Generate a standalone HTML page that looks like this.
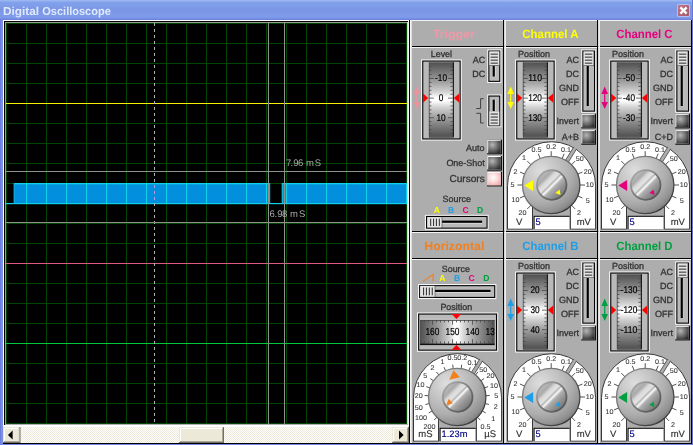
<!DOCTYPE html>
<html><head><meta charset="utf-8"><title>Digital Oscilloscope</title>
<style>html,body{margin:0;padding:0;background:#7b8fe4;overflow:hidden}svg{display:block;font-family:"Liberation Sans",sans-serif;will-change:transform;text-rendering:geometricPrecision}</style>
</head><body>
<svg width="693" height="445" viewBox="0 0 693 445">
<defs>
<linearGradient id="gClose" x1="0" y1="0" x2="1" y2="1"><stop offset="0" stop-color="#c27486"/><stop offset="1" stop-color="#a4566a"/></linearGradient>
<linearGradient id="gTitle" x1="0" y1="0" x2="0" y2="1"><stop offset="0" stop-color="#a2bbf2"/><stop offset="0.12" stop-color="#82a2ec"/><stop offset="0.5" stop-color="#7b96e4"/><stop offset="0.85" stop-color="#7f9ceb"/><stop offset="0.96" stop-color="#7388e0"/><stop offset="1" stop-color="#6a7cd8"/></linearGradient>
<linearGradient id="gLeft" x1="0" y1="0" x2="1" y2="0"><stop offset="0" stop-color="#5a68cc"/><stop offset="0.3" stop-color="#7c8fe6"/><stop offset="1" stop-color="#7c8fe6"/></linearGradient>
<linearGradient id="gDrumV" x1="0" y1="0" x2="0" y2="1"><stop offset="0" stop-color="#505050"/><stop offset="0.1" stop-color="#6e6e6e"/><stop offset="0.28" stop-color="#a6a6a6"/><stop offset="0.4" stop-color="#d4d4d4"/><stop offset="0.475" stop-color="#ffffff"/><stop offset="0.515" stop-color="#ffffff"/><stop offset="0.6" stop-color="#d4d4d4"/><stop offset="0.72" stop-color="#a6a6a6"/><stop offset="0.9" stop-color="#6e6e6e"/><stop offset="1" stop-color="#505050"/></linearGradient>
<linearGradient id="gDrumH" x1="0" y1="0" x2="1" y2="0"><stop offset="0" stop-color="#505050"/><stop offset="0.1" stop-color="#6e6e6e"/><stop offset="0.28" stop-color="#a6a6a6"/><stop offset="0.4" stop-color="#d4d4d4"/><stop offset="0.465" stop-color="#ffffff"/><stop offset="0.505" stop-color="#ffffff"/><stop offset="0.59" stop-color="#d4d4d4"/><stop offset="0.72" stop-color="#a6a6a6"/><stop offset="0.9" stop-color="#6e6e6e"/><stop offset="1" stop-color="#505050"/></linearGradient>
<radialGradient id="gKnobO" cx="0.32" cy="0.26" r="0.84"><stop offset="0" stop-color="#dedede"/><stop offset="0.3" stop-color="#c8c8c8"/><stop offset="0.65" stop-color="#adadad"/><stop offset="0.85" stop-color="#939393"/><stop offset="0.95" stop-color="#7c7c7c"/><stop offset="1" stop-color="#686868"/></radialGradient>
<linearGradient id="gRim" x1="0.15" y1="0.15" x2="0.85" y2="0.85"><stop offset="0" stop-color="#828282"/><stop offset="0.5" stop-color="#626262"/><stop offset="1" stop-color="#3a3a3a"/></linearGradient>
<linearGradient id="gKnobRing" x1="0.15" y1="0.15" x2="0.85" y2="0.85"><stop offset="0" stop-color="#a4a4a4"/><stop offset="0.5" stop-color="#7a7a7a"/><stop offset="1" stop-color="#565656"/></linearGradient>
<linearGradient id="gKnobI" x1="0.15" y1="0.15" x2="0.85" y2="0.85"><stop offset="0" stop-color="#b8b8b8"/><stop offset="0.15" stop-color="#aaaaaa"/><stop offset="0.28" stop-color="#dadada"/><stop offset="0.40" stop-color="#e2e2e2"/><stop offset="0.46" stop-color="#b6b6b6"/><stop offset="0.53" stop-color="#f8f8f8"/><stop offset="0.62" stop-color="#b0b0b0"/><stop offset="0.8" stop-color="#949494"/><stop offset="1" stop-color="#7c7c7c"/></linearGradient>
<radialGradient id="gBtn" cx="0.33" cy="0.33" r="0.8"><stop offset="0" stop-color="#b6b6b6"/><stop offset="0.45" stop-color="#787878"/><stop offset="1" stop-color="#2a2a2a"/></radialGradient>
<radialGradient id="gBtnP" cx="0.4" cy="0.38" r="0.75"><stop offset="0" stop-color="#ffffff"/><stop offset="0.5" stop-color="#fbd8d8"/><stop offset="1" stop-color="#eea8a8"/></radialGradient>
<pattern id="chk" width="2" height="2" patternUnits="userSpaceOnUse"><rect width="2" height="2" fill="#ffffff"/><rect width="1" height="1" fill="#ece9d8"/><rect x="1" y="1" width="1" height="1" fill="#ece9d8"/></pattern>
</defs>
<rect x="0" y="0" width="693" height="445" fill="#7b8fe4" />
<rect x="0" y="0" width="693" height="20" fill="url(#gTitle)" />
<rect x="0" y="20" width="3" height="425" fill="url(#gLeft)" />
<rect x="0" y="443" width="693" height="2" fill="#7088e4" />
<rect x="3" y="443" width="689" height="1" fill="#000" />
<text y="15.1" font-size="11.5" font-weight="bold" fill="#dfe8fd"><tspan x="2.9" textLength="36.1" lengthAdjust="spacingAndGlyphs">Digital</tspan> <tspan x="42.3" textLength="68.5" lengthAdjust="spacingAndGlyphs">Oscilloscope</tspan></text>
<rect x="692" y="0" width="1" height="445" fill="#6a74d8" />
<rect x="677" y="4" width="13" height="13" fill="#b4c0f2" rx="2"/>
<rect x="678" y="5" width="11" height="11" fill="url(#gClose)" rx="1"/>
<line x1="680.4" y1="7.4" x2="686.6" y2="13.6" stroke="#ffffff" stroke-width="2.3" />
<line x1="686.6" y1="7.4" x2="680.4" y2="13.6" stroke="#ffffff" stroke-width="2.3" />
<rect x="3" y="20" width="406" height="407" fill="#ffffff" />
<rect x="4" y="21" width="404" height="404" fill="#000000" />
<rect x="5" y="22" width="403" height="403" fill="#989898" />
<rect x="407" y="22" width="1" height="403" fill="#d4d4d4" />
<rect x="408" y="21" width="1" height="406" fill="#f4f4f4" />
<rect x="5" y="424" width="403" height="1" fill="#b0b0b0" />
<rect x="6" y="23" width="401" height="401" fill="#000000" />
<rect x="6" y="23" width="1" height="401" fill="#024402" />
<rect x="26" y="23" width="1" height="401" fill="#024402" />
<rect x="46" y="23" width="1" height="401" fill="#024402" />
<rect x="66" y="23" width="1" height="401" fill="#024402" />
<rect x="86" y="23" width="1" height="401" fill="#024402" />
<rect x="106" y="23" width="1" height="401" fill="#024402" />
<rect x="126" y="23" width="1" height="401" fill="#024402" />
<rect x="146" y="23" width="1" height="401" fill="#024402" />
<rect x="166" y="23" width="1" height="401" fill="#024402" />
<rect x="186" y="23" width="1" height="401" fill="#024402" />
<rect x="206" y="23" width="1" height="401" fill="#024402" />
<rect x="226" y="23" width="1" height="401" fill="#024402" />
<rect x="246" y="23" width="1" height="401" fill="#024402" />
<rect x="266" y="23" width="1" height="401" fill="#024402" />
<rect x="286" y="23" width="1" height="401" fill="#024402" />
<rect x="306" y="23" width="1" height="401" fill="#024402" />
<rect x="326" y="23" width="1" height="401" fill="#024402" />
<rect x="346" y="23" width="1" height="401" fill="#024402" />
<rect x="366" y="23" width="1" height="401" fill="#024402" />
<rect x="386" y="23" width="1" height="401" fill="#024402" />
<rect x="406" y="23" width="1" height="401" fill="#024402" />
<rect x="6" y="23" width="401" height="1" fill="#024402" />
<rect x="6" y="43" width="401" height="1" fill="#024402" />
<rect x="6" y="63" width="401" height="1" fill="#024402" />
<rect x="6" y="83" width="401" height="1" fill="#024402" />
<rect x="6" y="103" width="401" height="1" fill="#024402" />
<rect x="6" y="123" width="401" height="1" fill="#024402" />
<rect x="6" y="143" width="401" height="1" fill="#024402" />
<rect x="6" y="163" width="401" height="1" fill="#024402" />
<rect x="6" y="183" width="401" height="1" fill="#024402" />
<rect x="6" y="203" width="401" height="1" fill="#024402" />
<rect x="6" y="223" width="401" height="1" fill="#024402" />
<rect x="6" y="243" width="401" height="1" fill="#024402" />
<rect x="6" y="263" width="401" height="1" fill="#024402" />
<rect x="6" y="283" width="401" height="1" fill="#024402" />
<rect x="6" y="303" width="401" height="1" fill="#024402" />
<rect x="6" y="323" width="401" height="1" fill="#024402" />
<rect x="6" y="343" width="401" height="1" fill="#024402" />
<rect x="6" y="363" width="401" height="1" fill="#024402" />
<rect x="6" y="383" width="401" height="1" fill="#024402" />
<rect x="6" y="403" width="401" height="1" fill="#024402" />
<rect x="6" y="423" width="401" height="1" fill="#024402" />
<rect x="14" y="183" width="255.6" height="21" fill="#0290de" />
<rect x="282.2" y="183" width="124.8" height="21" fill="#0290de" />
<rect x="14" y="183" width="255.6" height="1.3" fill="#0cd2ea" />
<rect x="282.2" y="183" width="124.8" height="1.3" fill="#0cd2ea" />
<rect x="6" y="203" width="401" height="1.2" fill="#0cd2ea" />
<rect x="26" y="183" width="1" height="21" fill="#0cd2ea" />
<rect x="46" y="183" width="1" height="21" fill="#0cd2ea" />
<rect x="66" y="183" width="1" height="21" fill="#0cd2ea" />
<rect x="86" y="183" width="1" height="21" fill="#0cd2ea" />
<rect x="106" y="183" width="1" height="21" fill="#0cd2ea" />
<rect x="126" y="183" width="1" height="21" fill="#0cd2ea" />
<rect x="146" y="183" width="1" height="21" fill="#0cd2ea" />
<rect x="166" y="183" width="1" height="21" fill="#0cd2ea" />
<rect x="186" y="183" width="1" height="21" fill="#0cd2ea" />
<rect x="206" y="183" width="1" height="21" fill="#0cd2ea" />
<rect x="226" y="183" width="1" height="21" fill="#0cd2ea" />
<rect x="246" y="183" width="1" height="21" fill="#0cd2ea" />
<rect x="266" y="183" width="1" height="21" fill="#0cd2ea" />
<rect x="286" y="183" width="1" height="21" fill="#0cd2ea" />
<rect x="306" y="183" width="1" height="21" fill="#0cd2ea" />
<rect x="326" y="183" width="1" height="21" fill="#0cd2ea" />
<rect x="346" y="183" width="1" height="21" fill="#0cd2ea" />
<rect x="366" y="183" width="1" height="21" fill="#0cd2ea" />
<rect x="386" y="183" width="1" height="21" fill="#0cd2ea" />
<rect x="406" y="183" width="1" height="21" fill="#0cd2ea" />
<rect x="13.6" y="183" width="1" height="21" fill="#10b0e8" />
<rect x="269.2" y="183" width="1" height="21" fill="#0cd2ea" />
<rect x="281.7" y="183" width="1" height="21" fill="#0cd2ea" />
<rect x="6" y="103" width="401" height="1" fill="#f4f000" />
<rect x="6" y="263" width="401" height="1" fill="#dc5a84" />
<rect x="6" y="343" width="401" height="1" fill="#00c83c" />
<rect x="268" y="23" width="1" height="401" fill="#909090" />
<rect x="284" y="23" width="1" height="401" fill="#909090" />
<rect x="6" y="171" width="401" height="1" fill="#909090" />
<rect x="154" y="23" width="1" height="3" fill="#b2b2b2" />
<rect x="154" y="29" width="1" height="3" fill="#b2b2b2" />
<rect x="154" y="35" width="1" height="3" fill="#b2b2b2" />
<rect x="154" y="41" width="1" height="3" fill="#b2b2b2" />
<rect x="154" y="47" width="1" height="3" fill="#b2b2b2" />
<rect x="154" y="53" width="1" height="3" fill="#b2b2b2" />
<rect x="154" y="59" width="1" height="3" fill="#b2b2b2" />
<rect x="154" y="65" width="1" height="3" fill="#b2b2b2" />
<rect x="154" y="71" width="1" height="3" fill="#b2b2b2" />
<rect x="154" y="77" width="1" height="3" fill="#b2b2b2" />
<rect x="154" y="83" width="1" height="3" fill="#b2b2b2" />
<rect x="154" y="89" width="1" height="3" fill="#b2b2b2" />
<rect x="154" y="95" width="1" height="3" fill="#b2b2b2" />
<rect x="154" y="101" width="1" height="3" fill="#b2b2b2" />
<rect x="154" y="107" width="1" height="3" fill="#b2b2b2" />
<rect x="154" y="113" width="1" height="3" fill="#b2b2b2" />
<rect x="154" y="119" width="1" height="3" fill="#b2b2b2" />
<rect x="154" y="125" width="1" height="3" fill="#b2b2b2" />
<rect x="154" y="131" width="1" height="3" fill="#b2b2b2" />
<rect x="154" y="137" width="1" height="3" fill="#b2b2b2" />
<rect x="154" y="143" width="1" height="3" fill="#b2b2b2" />
<rect x="154" y="149" width="1" height="3" fill="#b2b2b2" />
<rect x="154" y="155" width="1" height="3" fill="#b2b2b2" />
<rect x="154" y="161" width="1" height="3" fill="#b2b2b2" />
<rect x="154" y="167" width="1" height="3" fill="#b2b2b2" />
<rect x="154" y="173" width="1" height="3" fill="#b2b2b2" />
<rect x="154" y="179" width="1" height="3" fill="#b2b2b2" />
<rect x="154" y="185" width="1" height="3" fill="#b89ae6" />
<rect x="154" y="191" width="1" height="3" fill="#b89ae6" />
<rect x="154" y="197" width="1" height="3" fill="#b89ae6" />
<rect x="154" y="203" width="1" height="3" fill="#b2b2b2" />
<rect x="154" y="209" width="1" height="3" fill="#b2b2b2" />
<rect x="154" y="215" width="1" height="3" fill="#b2b2b2" />
<rect x="154" y="221" width="1" height="3" fill="#b2b2b2" />
<rect x="154" y="227" width="1" height="3" fill="#b2b2b2" />
<rect x="154" y="233" width="1" height="3" fill="#b2b2b2" />
<rect x="154" y="239" width="1" height="3" fill="#b2b2b2" />
<rect x="154" y="245" width="1" height="3" fill="#b2b2b2" />
<rect x="154" y="251" width="1" height="3" fill="#b2b2b2" />
<rect x="154" y="257" width="1" height="3" fill="#b2b2b2" />
<rect x="154" y="263" width="1" height="3" fill="#b2b2b2" />
<rect x="154" y="269" width="1" height="3" fill="#b2b2b2" />
<rect x="154" y="275" width="1" height="3" fill="#b2b2b2" />
<rect x="154" y="281" width="1" height="3" fill="#b2b2b2" />
<rect x="154" y="287" width="1" height="3" fill="#b2b2b2" />
<rect x="154" y="293" width="1" height="3" fill="#b2b2b2" />
<rect x="154" y="299" width="1" height="3" fill="#b2b2b2" />
<rect x="154" y="305" width="1" height="3" fill="#b2b2b2" />
<rect x="154" y="311" width="1" height="3" fill="#b2b2b2" />
<rect x="154" y="317" width="1" height="3" fill="#b2b2b2" />
<rect x="154" y="323" width="1" height="3" fill="#b2b2b2" />
<rect x="154" y="329" width="1" height="3" fill="#b2b2b2" />
<rect x="154" y="335" width="1" height="3" fill="#b2b2b2" />
<rect x="154" y="341" width="1" height="3" fill="#b2b2b2" />
<rect x="154" y="347" width="1" height="3" fill="#b2b2b2" />
<rect x="154" y="353" width="1" height="3" fill="#b2b2b2" />
<rect x="154" y="359" width="1" height="3" fill="#b2b2b2" />
<rect x="154" y="365" width="1" height="3" fill="#b2b2b2" />
<rect x="154" y="371" width="1" height="3" fill="#b2b2b2" />
<rect x="154" y="377" width="1" height="3" fill="#b2b2b2" />
<rect x="154" y="383" width="1" height="3" fill="#b2b2b2" />
<rect x="154" y="389" width="1" height="3" fill="#b2b2b2" />
<rect x="154" y="395" width="1" height="3" fill="#b2b2b2" />
<rect x="154" y="401" width="1" height="3" fill="#b2b2b2" />
<rect x="154" y="407" width="1" height="3" fill="#b2b2b2" />
<rect x="154" y="413" width="1" height="3" fill="#b2b2b2" />
<rect x="154" y="419" width="1" height="3" fill="#b2b2b2" />
<text x="285.9 290.5 293.2 298 302.9 306 314.7" y="166.1" font-size="9.5" fill="#a8a8a8">7.96 mS</text>
<text x="269.6 274.5 277.3 282.1 287 290.1 299" y="217" font-size="9.5" fill="#a8a8a8">6.98 mS</text>
<rect x="6" y="222" width="401" height="1" fill="#909090" />
<rect x="3" y="427" width="406" height="16" fill="url(#chk)" />
<rect x="3" y="427" width="17.5" height="16" fill="#716f64" />
<rect x="3" y="427" width="16.5" height="15" fill="#ece9d8" />
<rect x="4" y="428" width="15.5" height="14" fill="#aca899" />
<rect x="4" y="428" width="14.5" height="13" fill="#ffffff" />
<rect x="5" y="429" width="13.5" height="12" fill="#ece9d8" />
<rect x="392" y="427" width="17" height="16" fill="#716f64" />
<rect x="392" y="427" width="16" height="15" fill="#ece9d8" />
<rect x="393" y="428" width="15" height="14" fill="#aca899" />
<rect x="393" y="428" width="14" height="13" fill="#ffffff" />
<rect x="394" y="429" width="13" height="12" fill="#ece9d8" />
<rect x="179" y="427" width="45" height="16" fill="#716f64" />
<rect x="179" y="427" width="44" height="15" fill="#ece9d8" />
<rect x="180" y="428" width="43" height="14" fill="#aca899" />
<rect x="180" y="428" width="42" height="13" fill="#ffffff" />
<rect x="181" y="429" width="41" height="12" fill="#ece9d8" />
<polygon points="8,435 12.6,430.5 12.6,439.5" fill="#000" />
<polygon points="403.6,435 399,430.5 399,439.5" fill="#000" />
<rect x="409" y="20" width="283" height="423" fill="#adadad" />
<rect x="410" y="20" width="93" height="1" fill="#f2f2f2" />
<rect x="504" y="20" width="93" height="1" fill="#f2f2f2" />
<rect x="598" y="20" width="93" height="1" fill="#f2f2f2" />
<rect x="410" y="47" width="93" height="1" fill="#f2f2f2" />
<rect x="504" y="47" width="93" height="1" fill="#f2f2f2" />
<rect x="598" y="47" width="93" height="1" fill="#f2f2f2" />
<rect x="410" y="232" width="93" height="1" fill="#f2f2f2" />
<rect x="504" y="232" width="93" height="1" fill="#f2f2f2" />
<rect x="598" y="232" width="93" height="1" fill="#f2f2f2" />
<rect x="410" y="259" width="93" height="1" fill="#f2f2f2" />
<rect x="504" y="259" width="93" height="1" fill="#f2f2f2" />
<rect x="598" y="259" width="93" height="1" fill="#f2f2f2" />
<rect x="409" y="46" width="283" height="1" fill="#000" />
<rect x="409" y="231" width="283" height="1" fill="#000" />
<rect x="409" y="258" width="283" height="1" fill="#000" />
<rect x="409" y="443" width="283" height="1" fill="#000" />
<rect x="410" y="20" width="1" height="423" fill="#f4f4f4" />
<rect x="411" y="20" width="1" height="423" fill="#e0e0e0" />
<rect x="504.3" y="20" width="1.7" height="423" fill="#ececec" />
<rect x="598.3" y="20" width="1.7" height="423" fill="#ececec" />
<rect x="409" y="20" width="1" height="424" fill="#000" />
<rect x="503" y="20" width="1" height="424" fill="#000" />
<rect x="597" y="20" width="1" height="424" fill="#000" />
<rect x="691" y="20" width="1" height="424" fill="#000" />
<text x="550.4" y="38.2" font-size="12" fill="#ffff00" text-anchor="middle" font-weight="bold" textLength="56.3" lengthAdjust="spacingAndGlyphs" >Channel A</text>
<text x="518" y="56.7" font-size="9" fill="#333333" textLength="32" lengthAdjust="spacingAndGlyphs" stroke="#333333" stroke-width="0.3" >Position</text>
<rect x="515.1" y="59.4" width="40.7" height="81.2" fill="#f4f4f4" />
<rect x="516.2" y="60.5" width="38.5" height="79" fill="#000" />
<rect x="517.3" y="61.6" width="36.3" height="76.8" fill="#b9b9b9" />
<rect x="523" y="62.3" width="24.7" height="74.5" fill="url(#gDrumV)" />
<rect x="546.8" y="62.3" width="1.1" height="74.5" fill="#101010" />
<rect x="522.8" y="62.3" width="0.8" height="74.5" fill="#484848" />
<rect x="523" y="136.8" width="24.9" height="0.8" fill="#303030" />
<clipPath id="cp515_59"><rect x="523" y="62.3" width="24.7" height="74.5"/></clipPath>
<g clip-path="url(#cp515_59)">
<rect x="523" y="66.26" width="2.4" height="0.8" fill="#484848" />
<rect x="544.4" y="66.26" width="2.4" height="0.8" fill="#484848" />
<rect x="523" y="70.19" width="2.4" height="0.8" fill="#484848" />
<rect x="544.4" y="70.19" width="2.4" height="0.8" fill="#484848" />
<rect x="523" y="74.12" width="2.4" height="0.8" fill="#484848" />
<rect x="544.4" y="74.12" width="2.4" height="0.8" fill="#484848" />
<rect x="523" y="78.05" width="4.8" height="0.8" fill="#484848" />
<rect x="542" y="78.05" width="4.8" height="0.8" fill="#484848" />
<rect x="523" y="81.98" width="2.4" height="0.8" fill="#484848" />
<rect x="544.4" y="81.98" width="2.4" height="0.8" fill="#484848" />
<rect x="523" y="85.91" width="2.4" height="0.8" fill="#484848" />
<rect x="544.4" y="85.91" width="2.4" height="0.8" fill="#484848" />
<rect x="523" y="89.84" width="2.4" height="0.8" fill="#484848" />
<rect x="544.4" y="89.84" width="2.4" height="0.8" fill="#484848" />
<rect x="523" y="93.77" width="2.4" height="0.8" fill="#484848" />
<rect x="544.4" y="93.77" width="2.4" height="0.8" fill="#484848" />
<rect x="523" y="97.7" width="4.8" height="0.8" fill="#484848" />
<rect x="542" y="97.7" width="4.8" height="0.8" fill="#484848" />
<rect x="523" y="101.63" width="2.4" height="0.8" fill="#484848" />
<rect x="544.4" y="101.63" width="2.4" height="0.8" fill="#484848" />
<rect x="523" y="105.56" width="2.4" height="0.8" fill="#484848" />
<rect x="544.4" y="105.56" width="2.4" height="0.8" fill="#484848" />
<rect x="523" y="109.49" width="2.4" height="0.8" fill="#484848" />
<rect x="544.4" y="109.49" width="2.4" height="0.8" fill="#484848" />
<rect x="523" y="113.42" width="2.4" height="0.8" fill="#484848" />
<rect x="544.4" y="113.42" width="2.4" height="0.8" fill="#484848" />
<rect x="523" y="117.35" width="4.8" height="0.8" fill="#484848" />
<rect x="542" y="117.35" width="4.8" height="0.8" fill="#484848" />
<rect x="523" y="121.28" width="2.4" height="0.8" fill="#484848" />
<rect x="544.4" y="121.28" width="2.4" height="0.8" fill="#484848" />
<rect x="523" y="125.21" width="2.4" height="0.8" fill="#484848" />
<rect x="544.4" y="125.21" width="2.4" height="0.8" fill="#484848" />
<rect x="523" y="129.14" width="2.4" height="0.8" fill="#484848" />
<rect x="544.4" y="129.14" width="2.4" height="0.8" fill="#484848" />
<rect x="523" y="133.07" width="2.4" height="0.8" fill="#484848" />
<rect x="544.4" y="133.07" width="2.4" height="0.8" fill="#484848" />
<text x="535.05" y="81.1" font-size="9.8" fill="#000" text-anchor="middle" textLength="13.81" lengthAdjust="spacingAndGlyphs" stroke="#000" stroke-width="0.2" >110</text>
<text x="535.05" y="101.2" font-size="9.8" fill="#000" text-anchor="middle" textLength="13.81" lengthAdjust="spacingAndGlyphs" stroke="#000" stroke-width="0.2" >120</text>
<text x="535.05" y="120.7" font-size="9.8" fill="#000" text-anchor="middle" textLength="13.81" lengthAdjust="spacingAndGlyphs" stroke="#000" stroke-width="0.2" >130</text>
</g>
<polygon points="517,93.5 522.2,98.1 517,102.7" fill="#ff0000" />
<polygon points="553.2,93.5 547.9,98.1 553.2,102.7" fill="#ff0000" />
<polygon points="510.7,86.4 514,93.9 507.4,93.9" fill="#ffff00" />
<polygon points="510.7,109 514,102 507.4,102" fill="#ffff00" />
<rect x="510.1" y="93.6" width="1.2" height="9" fill="#ffff00" />
<text x="579" y="62.6" font-size="9" fill="#333333" text-anchor="end" stroke="#333333" stroke-width="0.3" >AC</text>
<text x="579" y="77" font-size="9" fill="#333333" text-anchor="end" stroke="#333333" stroke-width="0.3" >DC</text>
<text x="579" y="90.9" font-size="9" fill="#333333" text-anchor="end" stroke="#333333" stroke-width="0.3" >GND</text>
<text x="579" y="104.6" font-size="9" fill="#333333" text-anchor="end" stroke="#333333" stroke-width="0.3" >OFF</text>
<rect x="581.2" y="49.4" width="15" height="63.4" fill="#f4f4f4" />
<rect x="582.3" y="50.5" width="12.8" height="61.2" fill="#000" />
<rect x="583.4" y="51.6" width="10.6" height="59" fill="#b9b9b9" />
<rect x="586.7" y="65.3" width="2.2" height="40.7" fill="#000" />
<rect x="588.9" y="65.3" width="0.8" height="40.7" fill="#c6c6c6" />
<rect x="583.6" y="51.4" width="10.6" height="14.6" fill="#404040" />
<rect x="583.6" y="51.4" width="10" height="14" fill="#e4e4e4" />
<rect x="584.9" y="53.6" width="7.4" height="1.1" fill="#3a3a3a" />
<rect x="584.9" y="56.6" width="7.4" height="1.1" fill="#3a3a3a" />
<rect x="584.9" y="59.6" width="7.4" height="1.1" fill="#3a3a3a" />
<rect x="584.9" y="62.6" width="7.4" height="1.1" fill="#3a3a3a" />
<text x="579" y="123.5" font-size="9" fill="#333333" text-anchor="end" stroke="#333333" stroke-width="0.3" >Invert</text>
<rect x="581.3" y="113.8" width="14.6" height="14.6" fill="#000" />
<rect x="581.3" y="113.8" width="13.5" height="13.5" fill="#ffffff" />
<rect x="582.3" y="114.8" width="12.5" height="12.5" fill="url(#gBtn)" />
<text x="579" y="140.1" font-size="9" fill="#333333" text-anchor="end" stroke="#333333" stroke-width="0.3" >A+B</text>
<rect x="581.3" y="130.1" width="14.6" height="14.6" fill="#000" />
<rect x="581.3" y="130.1" width="13.5" height="13.5" fill="#ffffff" />
<rect x="582.3" y="131.1" width="12.5" height="12.5" fill="url(#gBtn)" />
<path d="M507.5,229.2 L507.5,185.75 A44.05,44.05 0 0 1 595.6,185.75 L595.6,229.2 L570.4,229.2 L570.4,206 L532.5,206 L532.5,229.2 Z" fill="#ffffff" stroke="#383838" stroke-width="1"/>
<rect x="508.5" y="229.8" width="86.1" height="0.9" fill="#c4c4c4" />
<polygon points="567.3,163.75 576.65,148.79 573.77,146.98 564.42,161.95" fill="#adadad" />
<line x1="567.3" y1="163.75" x2="576.65" y2="148.79" stroke="#505050" stroke-width="0.9" />
<line x1="564.42" y1="161.95" x2="573.77" y2="146.98" stroke="#505050" stroke-width="0.9" />
<line x1="531.4" y1="204.8" x2="527.3" y2="208.9" stroke="#404040" stroke-width="0.9" />
<text x="522.41" y="214.94" font-size="6.9" fill="#3a3a3a" text-anchor="middle" textLength="7.98" lengthAdjust="spacingAndGlyphs" stroke="#3a3a3a" stroke-width="0.1" >20</text>
<line x1="525.33" y1="195.72" x2="519.97" y2="197.93" stroke="#404040" stroke-width="0.9" />
<text x="515.54" y="202.22" font-size="6.9" fill="#3a3a3a" text-anchor="middle" textLength="7.98" lengthAdjust="spacingAndGlyphs" stroke="#3a3a3a" stroke-width="0.1" >10</text>
<line x1="523.2" y1="185" x2="517.4" y2="185" stroke="#404040" stroke-width="0.9" />
<text x="512.6" y="187.45" font-size="6.9" fill="#3a3a3a" text-anchor="middle" textLength="3.99" lengthAdjust="spacingAndGlyphs" stroke="#3a3a3a" stroke-width="0.1" >5</text>
<line x1="525.33" y1="174.28" x2="519.97" y2="172.07" stroke="#404040" stroke-width="0.9" />
<text x="515.54" y="173.68" font-size="6.9" fill="#3a3a3a" text-anchor="middle" textLength="3.99" lengthAdjust="spacingAndGlyphs" stroke="#3a3a3a" stroke-width="0.1" >2</text>
<line x1="531.4" y1="165.2" x2="527.3" y2="161.1" stroke="#404040" stroke-width="0.9" />
<text x="523.91" y="160.16" font-size="6.9" fill="#3a3a3a" text-anchor="middle" textLength="3.99" lengthAdjust="spacingAndGlyphs" stroke="#3a3a3a" stroke-width="0.1" >1</text>
<line x1="540.48" y1="159.13" x2="538.27" y2="153.77" stroke="#404040" stroke-width="0.9" />
<text x="536.43" y="151.79" font-size="6.9" fill="#3a3a3a" text-anchor="middle" textLength="9.97" lengthAdjust="spacingAndGlyphs" stroke="#3a3a3a" stroke-width="0.1" >0.5</text>
<line x1="551.2" y1="157" x2="551.2" y2="151.2" stroke="#404040" stroke-width="0.9" />
<text x="551.2" y="148.85" font-size="6.9" fill="#3a3a3a" text-anchor="middle" textLength="9.97" lengthAdjust="spacingAndGlyphs" stroke="#3a3a3a" stroke-width="0.1" >0.2</text>
<line x1="561.92" y1="159.13" x2="564.13" y2="153.77" stroke="#404040" stroke-width="0.9" />
<text x="565.97" y="151.79" font-size="6.9" fill="#3a3a3a" text-anchor="middle" textLength="9.97" lengthAdjust="spacingAndGlyphs" stroke="#3a3a3a" stroke-width="0.1" >0.1</text>
<line x1="571" y1="165.2" x2="575.1" y2="161.1" stroke="#404040" stroke-width="0.9" />
<text x="579.69" y="161.36" font-size="6.9" fill="#3a3a3a" text-anchor="middle" textLength="7.98" lengthAdjust="spacingAndGlyphs" stroke="#3a3a3a" stroke-width="0.1" >50</text>
<line x1="577.07" y1="174.28" x2="582.43" y2="172.07" stroke="#404040" stroke-width="0.9" />
<text x="587.86" y="173.78" font-size="6.9" fill="#3a3a3a" text-anchor="middle" textLength="7.98" lengthAdjust="spacingAndGlyphs" stroke="#3a3a3a" stroke-width="0.1" >20</text>
<line x1="579.2" y1="185" x2="585" y2="185" stroke="#404040" stroke-width="0.9" />
<text x="589.8" y="187.45" font-size="6.9" fill="#3a3a3a" text-anchor="middle" textLength="7.98" lengthAdjust="spacingAndGlyphs" stroke="#3a3a3a" stroke-width="0.1" >10</text>
<line x1="577.07" y1="195.72" x2="582.43" y2="197.93" stroke="#404040" stroke-width="0.9" />
<text x="587.86" y="202.92" font-size="6.9" fill="#3a3a3a" text-anchor="middle" textLength="3.99" lengthAdjust="spacingAndGlyphs" stroke="#3a3a3a" stroke-width="0.1" >5</text>
<line x1="571" y1="204.8" x2="575.1" y2="208.9" stroke="#404040" stroke-width="0.9" />
<text x="579.09" y="214.74" font-size="6.9" fill="#3a3a3a" text-anchor="middle" textLength="3.99" lengthAdjust="spacingAndGlyphs" stroke="#3a3a3a" stroke-width="0.1" >2</text>
<circle cx="551.2" cy="185" r="28.7" fill="url(#gKnobO)" stroke="url(#gRim)" stroke-width="1.3"/>
<circle cx="551.7" cy="185" r="15.7" fill="url(#gKnobRing)"/>
<circle cx="551.7" cy="185" r="13.9" fill="url(#gKnobI)"/>
<polygon points="524.3,185.4 533.1,180.1 533.1,190.9" fill="#ffff00" />
<polygon points="555.4,193 559.5,189.4 560.6,195" fill="#ffff00" />
<rect x="533.6" y="215.8" width="36" height="13.4" fill="#000" />
<rect x="534.6" y="216.8" width="35" height="12.4" fill="#ffffff" />
<text x="535.6" y="224.8" font-size="9.3" fill="#000080" stroke="#000080" stroke-width="0.15" >5</text>
<text x="519.1" y="224.6" font-size="9.5" fill="#303030" text-anchor="middle" stroke="#303030" stroke-width="0.15" >V</text>
<text x="583.8" y="224.6" font-size="9.5" fill="#303030" text-anchor="middle" stroke="#303030" stroke-width="0.15" >mV</text>
<text x="644.4" y="38.2" font-size="12" fill="#e6007e" text-anchor="middle" font-weight="bold" textLength="56.3" lengthAdjust="spacingAndGlyphs" >Channel C</text>
<text x="612" y="56.7" font-size="9" fill="#333333" textLength="32" lengthAdjust="spacingAndGlyphs" stroke="#333333" stroke-width="0.3" >Position</text>
<rect x="609.1" y="59.4" width="40.7" height="81.2" fill="#f4f4f4" />
<rect x="610.2" y="60.5" width="38.5" height="79" fill="#000" />
<rect x="611.3" y="61.6" width="36.3" height="76.8" fill="#b9b9b9" />
<rect x="617" y="62.3" width="24.7" height="74.5" fill="url(#gDrumV)" />
<rect x="640.8" y="62.3" width="1.1" height="74.5" fill="#101010" />
<rect x="616.8" y="62.3" width="0.8" height="74.5" fill="#484848" />
<rect x="617" y="136.8" width="24.9" height="0.8" fill="#303030" />
<clipPath id="cp609_59"><rect x="617" y="62.3" width="24.7" height="74.5"/></clipPath>
<g clip-path="url(#cp609_59)">
<rect x="617" y="66.26" width="2.4" height="0.8" fill="#484848" />
<rect x="638.4" y="66.26" width="2.4" height="0.8" fill="#484848" />
<rect x="617" y="70.19" width="2.4" height="0.8" fill="#484848" />
<rect x="638.4" y="70.19" width="2.4" height="0.8" fill="#484848" />
<rect x="617" y="74.12" width="2.4" height="0.8" fill="#484848" />
<rect x="638.4" y="74.12" width="2.4" height="0.8" fill="#484848" />
<rect x="617" y="78.05" width="4.8" height="0.8" fill="#484848" />
<rect x="636" y="78.05" width="4.8" height="0.8" fill="#484848" />
<rect x="617" y="81.98" width="2.4" height="0.8" fill="#484848" />
<rect x="638.4" y="81.98" width="2.4" height="0.8" fill="#484848" />
<rect x="617" y="85.91" width="2.4" height="0.8" fill="#484848" />
<rect x="638.4" y="85.91" width="2.4" height="0.8" fill="#484848" />
<rect x="617" y="89.84" width="2.4" height="0.8" fill="#484848" />
<rect x="638.4" y="89.84" width="2.4" height="0.8" fill="#484848" />
<rect x="617" y="93.77" width="2.4" height="0.8" fill="#484848" />
<rect x="638.4" y="93.77" width="2.4" height="0.8" fill="#484848" />
<rect x="617" y="97.7" width="4.8" height="0.8" fill="#484848" />
<rect x="636" y="97.7" width="4.8" height="0.8" fill="#484848" />
<rect x="617" y="101.63" width="2.4" height="0.8" fill="#484848" />
<rect x="638.4" y="101.63" width="2.4" height="0.8" fill="#484848" />
<rect x="617" y="105.56" width="2.4" height="0.8" fill="#484848" />
<rect x="638.4" y="105.56" width="2.4" height="0.8" fill="#484848" />
<rect x="617" y="109.49" width="2.4" height="0.8" fill="#484848" />
<rect x="638.4" y="109.49" width="2.4" height="0.8" fill="#484848" />
<rect x="617" y="113.42" width="2.4" height="0.8" fill="#484848" />
<rect x="638.4" y="113.42" width="2.4" height="0.8" fill="#484848" />
<rect x="617" y="117.35" width="4.8" height="0.8" fill="#484848" />
<rect x="636" y="117.35" width="4.8" height="0.8" fill="#484848" />
<rect x="617" y="121.28" width="2.4" height="0.8" fill="#484848" />
<rect x="638.4" y="121.28" width="2.4" height="0.8" fill="#484848" />
<rect x="617" y="125.21" width="2.4" height="0.8" fill="#484848" />
<rect x="638.4" y="125.21" width="2.4" height="0.8" fill="#484848" />
<rect x="617" y="129.14" width="2.4" height="0.8" fill="#484848" />
<rect x="638.4" y="129.14" width="2.4" height="0.8" fill="#484848" />
<rect x="617" y="133.07" width="2.4" height="0.8" fill="#484848" />
<rect x="638.4" y="133.07" width="2.4" height="0.8" fill="#484848" />
<text x="629.05" y="81.1" font-size="9.8" fill="#000" text-anchor="middle" textLength="11.96" lengthAdjust="spacingAndGlyphs" stroke="#000" stroke-width="0.2" >-50</text>
<text x="629.05" y="101.2" font-size="9.8" fill="#000" text-anchor="middle" textLength="11.96" lengthAdjust="spacingAndGlyphs" stroke="#000" stroke-width="0.2" >-40</text>
<text x="629.05" y="120.7" font-size="9.8" fill="#000" text-anchor="middle" textLength="11.96" lengthAdjust="spacingAndGlyphs" stroke="#000" stroke-width="0.2" >-30</text>
</g>
<polygon points="611,93.5 616.2,98.1 611,102.7" fill="#ff0000" />
<polygon points="647.2,93.5 641.9,98.1 647.2,102.7" fill="#ff0000" />
<polygon points="604.7,86.4 608,93.9 601.4,93.9" fill="#e6007e" />
<polygon points="604.7,109 608,102 601.4,102" fill="#e6007e" />
<rect x="604.1" y="93.6" width="1.2" height="9" fill="#e6007e" />
<text x="673" y="62.6" font-size="9" fill="#333333" text-anchor="end" stroke="#333333" stroke-width="0.3" >AC</text>
<text x="673" y="77" font-size="9" fill="#333333" text-anchor="end" stroke="#333333" stroke-width="0.3" >DC</text>
<text x="673" y="90.9" font-size="9" fill="#333333" text-anchor="end" stroke="#333333" stroke-width="0.3" >GND</text>
<text x="673" y="104.6" font-size="9" fill="#333333" text-anchor="end" stroke="#333333" stroke-width="0.3" >OFF</text>
<rect x="675.2" y="49.4" width="15" height="63.4" fill="#f4f4f4" />
<rect x="676.3" y="50.5" width="12.8" height="61.2" fill="#000" />
<rect x="677.4" y="51.6" width="10.6" height="59" fill="#b9b9b9" />
<rect x="680.7" y="65.3" width="2.2" height="40.7" fill="#000" />
<rect x="682.9" y="65.3" width="0.8" height="40.7" fill="#c6c6c6" />
<rect x="677.6" y="51.4" width="10.6" height="14.6" fill="#404040" />
<rect x="677.6" y="51.4" width="10" height="14" fill="#e4e4e4" />
<rect x="678.9" y="53.6" width="7.4" height="1.1" fill="#3a3a3a" />
<rect x="678.9" y="56.6" width="7.4" height="1.1" fill="#3a3a3a" />
<rect x="678.9" y="59.6" width="7.4" height="1.1" fill="#3a3a3a" />
<rect x="678.9" y="62.6" width="7.4" height="1.1" fill="#3a3a3a" />
<text x="673" y="123.5" font-size="9" fill="#333333" text-anchor="end" stroke="#333333" stroke-width="0.3" >Invert</text>
<rect x="675.3" y="113.8" width="14.6" height="14.6" fill="#000" />
<rect x="675.3" y="113.8" width="13.5" height="13.5" fill="#ffffff" />
<rect x="676.3" y="114.8" width="12.5" height="12.5" fill="url(#gBtn)" />
<text x="673" y="140.1" font-size="9" fill="#333333" text-anchor="end" stroke="#333333" stroke-width="0.3" >C+D</text>
<rect x="675.3" y="130.1" width="14.6" height="14.6" fill="#000" />
<rect x="675.3" y="130.1" width="13.5" height="13.5" fill="#ffffff" />
<rect x="676.3" y="131.1" width="12.5" height="12.5" fill="url(#gBtn)" />
<path d="M601.5,229.2 L601.5,185.75 A44.05,44.05 0 0 1 689.6,185.75 L689.6,229.2 L664.4,229.2 L664.4,206 L626.5,206 L626.5,229.2 Z" fill="#ffffff" stroke="#383838" stroke-width="1"/>
<rect x="602.5" y="229.8" width="86.1" height="0.9" fill="#c4c4c4" />
<polygon points="661.3,163.75 670.65,148.79 667.77,146.98 658.42,161.95" fill="#adadad" />
<line x1="661.3" y1="163.75" x2="670.65" y2="148.79" stroke="#505050" stroke-width="0.9" />
<line x1="658.42" y1="161.95" x2="667.77" y2="146.98" stroke="#505050" stroke-width="0.9" />
<line x1="625.4" y1="204.8" x2="621.3" y2="208.9" stroke="#404040" stroke-width="0.9" />
<text x="616.41" y="214.94" font-size="6.9" fill="#3a3a3a" text-anchor="middle" textLength="7.98" lengthAdjust="spacingAndGlyphs" stroke="#3a3a3a" stroke-width="0.1" >20</text>
<line x1="619.33" y1="195.72" x2="613.97" y2="197.93" stroke="#404040" stroke-width="0.9" />
<text x="609.54" y="202.22" font-size="6.9" fill="#3a3a3a" text-anchor="middle" textLength="7.98" lengthAdjust="spacingAndGlyphs" stroke="#3a3a3a" stroke-width="0.1" >10</text>
<line x1="617.2" y1="185" x2="611.4" y2="185" stroke="#404040" stroke-width="0.9" />
<text x="606.6" y="187.45" font-size="6.9" fill="#3a3a3a" text-anchor="middle" textLength="3.99" lengthAdjust="spacingAndGlyphs" stroke="#3a3a3a" stroke-width="0.1" >5</text>
<line x1="619.33" y1="174.28" x2="613.97" y2="172.07" stroke="#404040" stroke-width="0.9" />
<text x="609.54" y="173.68" font-size="6.9" fill="#3a3a3a" text-anchor="middle" textLength="3.99" lengthAdjust="spacingAndGlyphs" stroke="#3a3a3a" stroke-width="0.1" >2</text>
<line x1="625.4" y1="165.2" x2="621.3" y2="161.1" stroke="#404040" stroke-width="0.9" />
<text x="617.91" y="160.16" font-size="6.9" fill="#3a3a3a" text-anchor="middle" textLength="3.99" lengthAdjust="spacingAndGlyphs" stroke="#3a3a3a" stroke-width="0.1" >1</text>
<line x1="634.48" y1="159.13" x2="632.27" y2="153.77" stroke="#404040" stroke-width="0.9" />
<text x="630.43" y="151.79" font-size="6.9" fill="#3a3a3a" text-anchor="middle" textLength="9.97" lengthAdjust="spacingAndGlyphs" stroke="#3a3a3a" stroke-width="0.1" >0.5</text>
<line x1="645.2" y1="157" x2="645.2" y2="151.2" stroke="#404040" stroke-width="0.9" />
<text x="645.2" y="148.85" font-size="6.9" fill="#3a3a3a" text-anchor="middle" textLength="9.97" lengthAdjust="spacingAndGlyphs" stroke="#3a3a3a" stroke-width="0.1" >0.2</text>
<line x1="655.92" y1="159.13" x2="658.13" y2="153.77" stroke="#404040" stroke-width="0.9" />
<text x="659.97" y="151.79" font-size="6.9" fill="#3a3a3a" text-anchor="middle" textLength="9.97" lengthAdjust="spacingAndGlyphs" stroke="#3a3a3a" stroke-width="0.1" >0.1</text>
<line x1="665" y1="165.2" x2="669.1" y2="161.1" stroke="#404040" stroke-width="0.9" />
<text x="673.69" y="161.36" font-size="6.9" fill="#3a3a3a" text-anchor="middle" textLength="7.98" lengthAdjust="spacingAndGlyphs" stroke="#3a3a3a" stroke-width="0.1" >50</text>
<line x1="671.07" y1="174.28" x2="676.43" y2="172.07" stroke="#404040" stroke-width="0.9" />
<text x="681.86" y="173.78" font-size="6.9" fill="#3a3a3a" text-anchor="middle" textLength="7.98" lengthAdjust="spacingAndGlyphs" stroke="#3a3a3a" stroke-width="0.1" >20</text>
<line x1="673.2" y1="185" x2="679" y2="185" stroke="#404040" stroke-width="0.9" />
<text x="683.8" y="187.45" font-size="6.9" fill="#3a3a3a" text-anchor="middle" textLength="7.98" lengthAdjust="spacingAndGlyphs" stroke="#3a3a3a" stroke-width="0.1" >10</text>
<line x1="671.07" y1="195.72" x2="676.43" y2="197.93" stroke="#404040" stroke-width="0.9" />
<text x="681.86" y="202.92" font-size="6.9" fill="#3a3a3a" text-anchor="middle" textLength="3.99" lengthAdjust="spacingAndGlyphs" stroke="#3a3a3a" stroke-width="0.1" >5</text>
<line x1="665" y1="204.8" x2="669.1" y2="208.9" stroke="#404040" stroke-width="0.9" />
<text x="673.09" y="214.74" font-size="6.9" fill="#3a3a3a" text-anchor="middle" textLength="3.99" lengthAdjust="spacingAndGlyphs" stroke="#3a3a3a" stroke-width="0.1" >2</text>
<circle cx="645.2" cy="185" r="28.7" fill="url(#gKnobO)" stroke="url(#gRim)" stroke-width="1.3"/>
<circle cx="645.7" cy="185" r="15.7" fill="url(#gKnobRing)"/>
<circle cx="645.7" cy="185" r="13.9" fill="url(#gKnobI)"/>
<polygon points="618.3,185.4 627.1,180.1 627.1,190.9" fill="#e6007e" />
<polygon points="649.4,193 653.5,189.4 654.6,195" fill="#e6007e" />
<rect x="627.6" y="215.8" width="36" height="13.4" fill="#000" />
<rect x="628.6" y="216.8" width="35" height="12.4" fill="#ffffff" />
<text x="629.6" y="224.8" font-size="9.3" fill="#000080" stroke="#000080" stroke-width="0.15" >5</text>
<text x="613.1" y="224.6" font-size="9.5" fill="#303030" text-anchor="middle" stroke="#303030" stroke-width="0.15" >V</text>
<text x="677.8" y="224.6" font-size="9.5" fill="#303030" text-anchor="middle" stroke="#303030" stroke-width="0.15" >mV</text>
<text x="550.4" y="250.2" font-size="12" fill="#1e9ee8" text-anchor="middle" font-weight="bold" textLength="56.3" lengthAdjust="spacingAndGlyphs" >Channel B</text>
<text x="518" y="268.7" font-size="9" fill="#333333" textLength="32" lengthAdjust="spacingAndGlyphs" stroke="#333333" stroke-width="0.3" >Position</text>
<rect x="515.1" y="271.4" width="40.7" height="81.2" fill="#f4f4f4" />
<rect x="516.2" y="272.5" width="38.5" height="79" fill="#000" />
<rect x="517.3" y="273.6" width="36.3" height="76.8" fill="#b9b9b9" />
<rect x="523" y="274.3" width="24.7" height="74.5" fill="url(#gDrumV)" />
<rect x="546.8" y="274.3" width="1.1" height="74.5" fill="#101010" />
<rect x="522.8" y="274.3" width="0.8" height="74.5" fill="#484848" />
<rect x="523" y="348.8" width="24.9" height="0.8" fill="#303030" />
<clipPath id="cp515_271"><rect x="523" y="274.3" width="24.7" height="74.5"/></clipPath>
<g clip-path="url(#cp515_271)">
<rect x="523" y="278.26" width="2.4" height="0.8" fill="#484848" />
<rect x="544.4" y="278.26" width="2.4" height="0.8" fill="#484848" />
<rect x="523" y="282.19" width="2.4" height="0.8" fill="#484848" />
<rect x="544.4" y="282.19" width="2.4" height="0.8" fill="#484848" />
<rect x="523" y="286.12" width="2.4" height="0.8" fill="#484848" />
<rect x="544.4" y="286.12" width="2.4" height="0.8" fill="#484848" />
<rect x="523" y="290.05" width="4.8" height="0.8" fill="#484848" />
<rect x="542" y="290.05" width="4.8" height="0.8" fill="#484848" />
<rect x="523" y="293.98" width="2.4" height="0.8" fill="#484848" />
<rect x="544.4" y="293.98" width="2.4" height="0.8" fill="#484848" />
<rect x="523" y="297.91" width="2.4" height="0.8" fill="#484848" />
<rect x="544.4" y="297.91" width="2.4" height="0.8" fill="#484848" />
<rect x="523" y="301.84" width="2.4" height="0.8" fill="#484848" />
<rect x="544.4" y="301.84" width="2.4" height="0.8" fill="#484848" />
<rect x="523" y="305.77" width="2.4" height="0.8" fill="#484848" />
<rect x="544.4" y="305.77" width="2.4" height="0.8" fill="#484848" />
<rect x="523" y="309.7" width="4.8" height="0.8" fill="#484848" />
<rect x="542" y="309.7" width="4.8" height="0.8" fill="#484848" />
<rect x="523" y="313.63" width="2.4" height="0.8" fill="#484848" />
<rect x="544.4" y="313.63" width="2.4" height="0.8" fill="#484848" />
<rect x="523" y="317.56" width="2.4" height="0.8" fill="#484848" />
<rect x="544.4" y="317.56" width="2.4" height="0.8" fill="#484848" />
<rect x="523" y="321.49" width="2.4" height="0.8" fill="#484848" />
<rect x="544.4" y="321.49" width="2.4" height="0.8" fill="#484848" />
<rect x="523" y="325.42" width="2.4" height="0.8" fill="#484848" />
<rect x="544.4" y="325.42" width="2.4" height="0.8" fill="#484848" />
<rect x="523" y="329.35" width="4.8" height="0.8" fill="#484848" />
<rect x="542" y="329.35" width="4.8" height="0.8" fill="#484848" />
<rect x="523" y="333.28" width="2.4" height="0.8" fill="#484848" />
<rect x="544.4" y="333.28" width="2.4" height="0.8" fill="#484848" />
<rect x="523" y="337.21" width="2.4" height="0.8" fill="#484848" />
<rect x="544.4" y="337.21" width="2.4" height="0.8" fill="#484848" />
<rect x="523" y="341.14" width="2.4" height="0.8" fill="#484848" />
<rect x="544.4" y="341.14" width="2.4" height="0.8" fill="#484848" />
<rect x="523" y="345.07" width="2.4" height="0.8" fill="#484848" />
<rect x="544.4" y="345.07" width="2.4" height="0.8" fill="#484848" />
<text x="535.05" y="293.1" font-size="9.8" fill="#000" text-anchor="middle" textLength="9.21" lengthAdjust="spacingAndGlyphs" stroke="#000" stroke-width="0.2" >20</text>
<text x="535.05" y="313.2" font-size="9.8" fill="#000" text-anchor="middle" textLength="9.21" lengthAdjust="spacingAndGlyphs" stroke="#000" stroke-width="0.2" >30</text>
<text x="535.05" y="332.7" font-size="9.8" fill="#000" text-anchor="middle" textLength="9.21" lengthAdjust="spacingAndGlyphs" stroke="#000" stroke-width="0.2" >40</text>
</g>
<polygon points="517,305.5 522.2,310.1 517,314.7" fill="#ff0000" />
<polygon points="553.2,305.5 547.9,310.1 553.2,314.7" fill="#ff0000" />
<polygon points="510.7,298.4 514,305.9 507.4,305.9" fill="#1e9ee8" />
<polygon points="510.7,321 514,314 507.4,314" fill="#1e9ee8" />
<rect x="510.1" y="305.6" width="1.2" height="9" fill="#1e9ee8" />
<text x="579" y="274.6" font-size="9" fill="#333333" text-anchor="end" stroke="#333333" stroke-width="0.3" >AC</text>
<text x="579" y="289" font-size="9" fill="#333333" text-anchor="end" stroke="#333333" stroke-width="0.3" >DC</text>
<text x="579" y="302.9" font-size="9" fill="#333333" text-anchor="end" stroke="#333333" stroke-width="0.3" >GND</text>
<text x="579" y="316.6" font-size="9" fill="#333333" text-anchor="end" stroke="#333333" stroke-width="0.3" >OFF</text>
<rect x="581.2" y="261.4" width="15" height="63.4" fill="#f4f4f4" />
<rect x="582.3" y="262.5" width="12.8" height="61.2" fill="#000" />
<rect x="583.4" y="263.6" width="10.6" height="59" fill="#b9b9b9" />
<rect x="586.7" y="277.3" width="2.2" height="40.7" fill="#000" />
<rect x="588.9" y="277.3" width="0.8" height="40.7" fill="#c6c6c6" />
<rect x="583.6" y="263.4" width="10.6" height="14.6" fill="#404040" />
<rect x="583.6" y="263.4" width="10" height="14" fill="#e4e4e4" />
<rect x="584.9" y="265.6" width="7.4" height="1.1" fill="#3a3a3a" />
<rect x="584.9" y="268.6" width="7.4" height="1.1" fill="#3a3a3a" />
<rect x="584.9" y="271.6" width="7.4" height="1.1" fill="#3a3a3a" />
<rect x="584.9" y="274.6" width="7.4" height="1.1" fill="#3a3a3a" />
<text x="579" y="335.5" font-size="9" fill="#333333" text-anchor="end" stroke="#333333" stroke-width="0.3" >Invert</text>
<rect x="581.3" y="325.8" width="14.6" height="14.6" fill="#000" />
<rect x="581.3" y="325.8" width="13.5" height="13.5" fill="#ffffff" />
<rect x="582.3" y="326.8" width="12.5" height="12.5" fill="url(#gBtn)" />
<path d="M507.5,441.2 L507.5,397.75 A44.05,44.05 0 0 1 595.6,397.75 L595.6,441.2 L570.4,441.2 L570.4,418 L532.5,418 L532.5,441.2 Z" fill="#ffffff" stroke="#383838" stroke-width="1"/>
<rect x="508.5" y="441.8" width="86.1" height="0.9" fill="#c4c4c4" />
<polygon points="567.3,375.75 576.65,360.79 573.77,358.98 564.42,373.95" fill="#adadad" />
<line x1="567.3" y1="375.75" x2="576.65" y2="360.79" stroke="#505050" stroke-width="0.9" />
<line x1="564.42" y1="373.95" x2="573.77" y2="358.98" stroke="#505050" stroke-width="0.9" />
<line x1="531.4" y1="416.8" x2="527.3" y2="420.9" stroke="#404040" stroke-width="0.9" />
<text x="522.41" y="426.94" font-size="6.9" fill="#3a3a3a" text-anchor="middle" textLength="7.98" lengthAdjust="spacingAndGlyphs" stroke="#3a3a3a" stroke-width="0.1" >20</text>
<line x1="525.33" y1="407.72" x2="519.97" y2="409.93" stroke="#404040" stroke-width="0.9" />
<text x="515.54" y="414.22" font-size="6.9" fill="#3a3a3a" text-anchor="middle" textLength="7.98" lengthAdjust="spacingAndGlyphs" stroke="#3a3a3a" stroke-width="0.1" >10</text>
<line x1="523.2" y1="397" x2="517.4" y2="397" stroke="#404040" stroke-width="0.9" />
<text x="512.6" y="399.45" font-size="6.9" fill="#3a3a3a" text-anchor="middle" textLength="3.99" lengthAdjust="spacingAndGlyphs" stroke="#3a3a3a" stroke-width="0.1" >5</text>
<line x1="525.33" y1="386.28" x2="519.97" y2="384.07" stroke="#404040" stroke-width="0.9" />
<text x="515.54" y="385.68" font-size="6.9" fill="#3a3a3a" text-anchor="middle" textLength="3.99" lengthAdjust="spacingAndGlyphs" stroke="#3a3a3a" stroke-width="0.1" >2</text>
<line x1="531.4" y1="377.2" x2="527.3" y2="373.1" stroke="#404040" stroke-width="0.9" />
<text x="523.91" y="372.16" font-size="6.9" fill="#3a3a3a" text-anchor="middle" textLength="3.99" lengthAdjust="spacingAndGlyphs" stroke="#3a3a3a" stroke-width="0.1" >1</text>
<line x1="540.48" y1="371.13" x2="538.27" y2="365.77" stroke="#404040" stroke-width="0.9" />
<text x="536.43" y="363.79" font-size="6.9" fill="#3a3a3a" text-anchor="middle" textLength="9.97" lengthAdjust="spacingAndGlyphs" stroke="#3a3a3a" stroke-width="0.1" >0.5</text>
<line x1="551.2" y1="369" x2="551.2" y2="363.2" stroke="#404040" stroke-width="0.9" />
<text x="551.2" y="360.85" font-size="6.9" fill="#3a3a3a" text-anchor="middle" textLength="9.97" lengthAdjust="spacingAndGlyphs" stroke="#3a3a3a" stroke-width="0.1" >0.2</text>
<line x1="561.92" y1="371.13" x2="564.13" y2="365.77" stroke="#404040" stroke-width="0.9" />
<text x="565.97" y="363.79" font-size="6.9" fill="#3a3a3a" text-anchor="middle" textLength="9.97" lengthAdjust="spacingAndGlyphs" stroke="#3a3a3a" stroke-width="0.1" >0.1</text>
<line x1="571" y1="377.2" x2="575.1" y2="373.1" stroke="#404040" stroke-width="0.9" />
<text x="579.69" y="373.36" font-size="6.9" fill="#3a3a3a" text-anchor="middle" textLength="7.98" lengthAdjust="spacingAndGlyphs" stroke="#3a3a3a" stroke-width="0.1" >50</text>
<line x1="577.07" y1="386.28" x2="582.43" y2="384.07" stroke="#404040" stroke-width="0.9" />
<text x="587.86" y="385.78" font-size="6.9" fill="#3a3a3a" text-anchor="middle" textLength="7.98" lengthAdjust="spacingAndGlyphs" stroke="#3a3a3a" stroke-width="0.1" >20</text>
<line x1="579.2" y1="397" x2="585" y2="397" stroke="#404040" stroke-width="0.9" />
<text x="589.8" y="399.45" font-size="6.9" fill="#3a3a3a" text-anchor="middle" textLength="7.98" lengthAdjust="spacingAndGlyphs" stroke="#3a3a3a" stroke-width="0.1" >10</text>
<line x1="577.07" y1="407.72" x2="582.43" y2="409.93" stroke="#404040" stroke-width="0.9" />
<text x="587.86" y="414.92" font-size="6.9" fill="#3a3a3a" text-anchor="middle" textLength="3.99" lengthAdjust="spacingAndGlyphs" stroke="#3a3a3a" stroke-width="0.1" >5</text>
<line x1="571" y1="416.8" x2="575.1" y2="420.9" stroke="#404040" stroke-width="0.9" />
<text x="579.09" y="426.74" font-size="6.9" fill="#3a3a3a" text-anchor="middle" textLength="3.99" lengthAdjust="spacingAndGlyphs" stroke="#3a3a3a" stroke-width="0.1" >2</text>
<circle cx="551.2" cy="397" r="28.7" fill="url(#gKnobO)" stroke="url(#gRim)" stroke-width="1.3"/>
<circle cx="551.7" cy="397" r="15.7" fill="url(#gKnobRing)"/>
<circle cx="551.7" cy="397" r="13.9" fill="url(#gKnobI)"/>
<polygon points="524.3,397.4 533.1,392.1 533.1,402.9" fill="#1e9ee8" />
<polygon points="555.4,405 559.5,401.4 560.6,407" fill="#1e9ee8" />
<rect x="533.6" y="427.8" width="36" height="13.4" fill="#000" />
<rect x="534.6" y="428.8" width="35" height="12.4" fill="#ffffff" />
<text x="535.6" y="436.8" font-size="9.3" fill="#000080" stroke="#000080" stroke-width="0.15" >5</text>
<text x="519.1" y="436.6" font-size="9.5" fill="#303030" text-anchor="middle" stroke="#303030" stroke-width="0.15" >V</text>
<text x="583.8" y="436.6" font-size="9.5" fill="#303030" text-anchor="middle" stroke="#303030" stroke-width="0.15" >mV</text>
<text x="644.4" y="250.2" font-size="12" fill="#00a040" text-anchor="middle" font-weight="bold" textLength="56.3" lengthAdjust="spacingAndGlyphs" >Channel D</text>
<text x="612" y="268.7" font-size="9" fill="#333333" textLength="32" lengthAdjust="spacingAndGlyphs" stroke="#333333" stroke-width="0.3" >Position</text>
<rect x="609.1" y="271.4" width="40.7" height="81.2" fill="#f4f4f4" />
<rect x="610.2" y="272.5" width="38.5" height="79" fill="#000" />
<rect x="611.3" y="273.6" width="36.3" height="76.8" fill="#b9b9b9" />
<rect x="617" y="274.3" width="24.7" height="74.5" fill="url(#gDrumV)" />
<rect x="640.8" y="274.3" width="1.1" height="74.5" fill="#101010" />
<rect x="616.8" y="274.3" width="0.8" height="74.5" fill="#484848" />
<rect x="617" y="348.8" width="24.9" height="0.8" fill="#303030" />
<clipPath id="cp609_271"><rect x="617" y="274.3" width="24.7" height="74.5"/></clipPath>
<g clip-path="url(#cp609_271)">
<rect x="617" y="278.26" width="2.4" height="0.8" fill="#484848" />
<rect x="638.4" y="278.26" width="2.4" height="0.8" fill="#484848" />
<rect x="617" y="282.19" width="2.4" height="0.8" fill="#484848" />
<rect x="638.4" y="282.19" width="2.4" height="0.8" fill="#484848" />
<rect x="617" y="286.12" width="2.4" height="0.8" fill="#484848" />
<rect x="638.4" y="286.12" width="2.4" height="0.8" fill="#484848" />
<rect x="617" y="290.05" width="4.8" height="0.8" fill="#484848" />
<rect x="636" y="290.05" width="4.8" height="0.8" fill="#484848" />
<rect x="617" y="293.98" width="2.4" height="0.8" fill="#484848" />
<rect x="638.4" y="293.98" width="2.4" height="0.8" fill="#484848" />
<rect x="617" y="297.91" width="2.4" height="0.8" fill="#484848" />
<rect x="638.4" y="297.91" width="2.4" height="0.8" fill="#484848" />
<rect x="617" y="301.84" width="2.4" height="0.8" fill="#484848" />
<rect x="638.4" y="301.84" width="2.4" height="0.8" fill="#484848" />
<rect x="617" y="305.77" width="2.4" height="0.8" fill="#484848" />
<rect x="638.4" y="305.77" width="2.4" height="0.8" fill="#484848" />
<rect x="617" y="309.7" width="4.8" height="0.8" fill="#484848" />
<rect x="636" y="309.7" width="4.8" height="0.8" fill="#484848" />
<rect x="617" y="313.63" width="2.4" height="0.8" fill="#484848" />
<rect x="638.4" y="313.63" width="2.4" height="0.8" fill="#484848" />
<rect x="617" y="317.56" width="2.4" height="0.8" fill="#484848" />
<rect x="638.4" y="317.56" width="2.4" height="0.8" fill="#484848" />
<rect x="617" y="321.49" width="2.4" height="0.8" fill="#484848" />
<rect x="638.4" y="321.49" width="2.4" height="0.8" fill="#484848" />
<rect x="617" y="325.42" width="2.4" height="0.8" fill="#484848" />
<rect x="638.4" y="325.42" width="2.4" height="0.8" fill="#484848" />
<rect x="617" y="329.35" width="4.8" height="0.8" fill="#484848" />
<rect x="636" y="329.35" width="4.8" height="0.8" fill="#484848" />
<rect x="617" y="333.28" width="2.4" height="0.8" fill="#484848" />
<rect x="638.4" y="333.28" width="2.4" height="0.8" fill="#484848" />
<rect x="617" y="337.21" width="2.4" height="0.8" fill="#484848" />
<rect x="638.4" y="337.21" width="2.4" height="0.8" fill="#484848" />
<rect x="617" y="341.14" width="2.4" height="0.8" fill="#484848" />
<rect x="638.4" y="341.14" width="2.4" height="0.8" fill="#484848" />
<rect x="617" y="345.07" width="2.4" height="0.8" fill="#484848" />
<rect x="638.4" y="345.07" width="2.4" height="0.8" fill="#484848" />
<text x="629.05" y="293.1" font-size="9.8" fill="#000" text-anchor="middle" textLength="16.57" lengthAdjust="spacingAndGlyphs" stroke="#000" stroke-width="0.2" >-130</text>
<text x="629.05" y="313.2" font-size="9.8" fill="#000" text-anchor="middle" textLength="16.57" lengthAdjust="spacingAndGlyphs" stroke="#000" stroke-width="0.2" >-120</text>
<text x="629.05" y="332.7" font-size="9.8" fill="#000" text-anchor="middle" textLength="16.57" lengthAdjust="spacingAndGlyphs" stroke="#000" stroke-width="0.2" >-110</text>
</g>
<polygon points="611,305.5 616.2,310.1 611,314.7" fill="#ff0000" />
<polygon points="647.2,305.5 641.9,310.1 647.2,314.7" fill="#ff0000" />
<polygon points="604.7,298.4 608,305.9 601.4,305.9" fill="#00a040" />
<polygon points="604.7,321 608,314 601.4,314" fill="#00a040" />
<rect x="604.1" y="305.6" width="1.2" height="9" fill="#00a040" />
<text x="673" y="274.6" font-size="9" fill="#333333" text-anchor="end" stroke="#333333" stroke-width="0.3" >AC</text>
<text x="673" y="289" font-size="9" fill="#333333" text-anchor="end" stroke="#333333" stroke-width="0.3" >DC</text>
<text x="673" y="302.9" font-size="9" fill="#333333" text-anchor="end" stroke="#333333" stroke-width="0.3" >GND</text>
<text x="673" y="316.6" font-size="9" fill="#333333" text-anchor="end" stroke="#333333" stroke-width="0.3" >OFF</text>
<rect x="675.2" y="261.4" width="15" height="63.4" fill="#f4f4f4" />
<rect x="676.3" y="262.5" width="12.8" height="61.2" fill="#000" />
<rect x="677.4" y="263.6" width="10.6" height="59" fill="#b9b9b9" />
<rect x="680.7" y="277.3" width="2.2" height="40.7" fill="#000" />
<rect x="682.9" y="277.3" width="0.8" height="40.7" fill="#c6c6c6" />
<rect x="677.6" y="263.4" width="10.6" height="14.6" fill="#404040" />
<rect x="677.6" y="263.4" width="10" height="14" fill="#e4e4e4" />
<rect x="678.9" y="265.6" width="7.4" height="1.1" fill="#3a3a3a" />
<rect x="678.9" y="268.6" width="7.4" height="1.1" fill="#3a3a3a" />
<rect x="678.9" y="271.6" width="7.4" height="1.1" fill="#3a3a3a" />
<rect x="678.9" y="274.6" width="7.4" height="1.1" fill="#3a3a3a" />
<text x="673" y="335.5" font-size="9" fill="#333333" text-anchor="end" stroke="#333333" stroke-width="0.3" >Invert</text>
<rect x="675.3" y="325.8" width="14.6" height="14.6" fill="#000" />
<rect x="675.3" y="325.8" width="13.5" height="13.5" fill="#ffffff" />
<rect x="676.3" y="326.8" width="12.5" height="12.5" fill="url(#gBtn)" />
<path d="M601.5,441.2 L601.5,397.75 A44.05,44.05 0 0 1 689.6,397.75 L689.6,441.2 L664.4,441.2 L664.4,418 L626.5,418 L626.5,441.2 Z" fill="#ffffff" stroke="#383838" stroke-width="1"/>
<rect x="602.5" y="441.8" width="86.1" height="0.9" fill="#c4c4c4" />
<polygon points="661.3,375.75 670.65,360.79 667.77,358.98 658.42,373.95" fill="#adadad" />
<line x1="661.3" y1="375.75" x2="670.65" y2="360.79" stroke="#505050" stroke-width="0.9" />
<line x1="658.42" y1="373.95" x2="667.77" y2="358.98" stroke="#505050" stroke-width="0.9" />
<line x1="625.4" y1="416.8" x2="621.3" y2="420.9" stroke="#404040" stroke-width="0.9" />
<text x="616.41" y="426.94" font-size="6.9" fill="#3a3a3a" text-anchor="middle" textLength="7.98" lengthAdjust="spacingAndGlyphs" stroke="#3a3a3a" stroke-width="0.1" >20</text>
<line x1="619.33" y1="407.72" x2="613.97" y2="409.93" stroke="#404040" stroke-width="0.9" />
<text x="609.54" y="414.22" font-size="6.9" fill="#3a3a3a" text-anchor="middle" textLength="7.98" lengthAdjust="spacingAndGlyphs" stroke="#3a3a3a" stroke-width="0.1" >10</text>
<line x1="617.2" y1="397" x2="611.4" y2="397" stroke="#404040" stroke-width="0.9" />
<text x="606.6" y="399.45" font-size="6.9" fill="#3a3a3a" text-anchor="middle" textLength="3.99" lengthAdjust="spacingAndGlyphs" stroke="#3a3a3a" stroke-width="0.1" >5</text>
<line x1="619.33" y1="386.28" x2="613.97" y2="384.07" stroke="#404040" stroke-width="0.9" />
<text x="609.54" y="385.68" font-size="6.9" fill="#3a3a3a" text-anchor="middle" textLength="3.99" lengthAdjust="spacingAndGlyphs" stroke="#3a3a3a" stroke-width="0.1" >2</text>
<line x1="625.4" y1="377.2" x2="621.3" y2="373.1" stroke="#404040" stroke-width="0.9" />
<text x="617.91" y="372.16" font-size="6.9" fill="#3a3a3a" text-anchor="middle" textLength="3.99" lengthAdjust="spacingAndGlyphs" stroke="#3a3a3a" stroke-width="0.1" >1</text>
<line x1="634.48" y1="371.13" x2="632.27" y2="365.77" stroke="#404040" stroke-width="0.9" />
<text x="630.43" y="363.79" font-size="6.9" fill="#3a3a3a" text-anchor="middle" textLength="9.97" lengthAdjust="spacingAndGlyphs" stroke="#3a3a3a" stroke-width="0.1" >0.5</text>
<line x1="645.2" y1="369" x2="645.2" y2="363.2" stroke="#404040" stroke-width="0.9" />
<text x="645.2" y="360.85" font-size="6.9" fill="#3a3a3a" text-anchor="middle" textLength="9.97" lengthAdjust="spacingAndGlyphs" stroke="#3a3a3a" stroke-width="0.1" >0.2</text>
<line x1="655.92" y1="371.13" x2="658.13" y2="365.77" stroke="#404040" stroke-width="0.9" />
<text x="659.97" y="363.79" font-size="6.9" fill="#3a3a3a" text-anchor="middle" textLength="9.97" lengthAdjust="spacingAndGlyphs" stroke="#3a3a3a" stroke-width="0.1" >0.1</text>
<line x1="665" y1="377.2" x2="669.1" y2="373.1" stroke="#404040" stroke-width="0.9" />
<text x="673.69" y="373.36" font-size="6.9" fill="#3a3a3a" text-anchor="middle" textLength="7.98" lengthAdjust="spacingAndGlyphs" stroke="#3a3a3a" stroke-width="0.1" >50</text>
<line x1="671.07" y1="386.28" x2="676.43" y2="384.07" stroke="#404040" stroke-width="0.9" />
<text x="681.86" y="385.78" font-size="6.9" fill="#3a3a3a" text-anchor="middle" textLength="7.98" lengthAdjust="spacingAndGlyphs" stroke="#3a3a3a" stroke-width="0.1" >20</text>
<line x1="673.2" y1="397" x2="679" y2="397" stroke="#404040" stroke-width="0.9" />
<text x="683.8" y="399.45" font-size="6.9" fill="#3a3a3a" text-anchor="middle" textLength="7.98" lengthAdjust="spacingAndGlyphs" stroke="#3a3a3a" stroke-width="0.1" >10</text>
<line x1="671.07" y1="407.72" x2="676.43" y2="409.93" stroke="#404040" stroke-width="0.9" />
<text x="681.86" y="414.92" font-size="6.9" fill="#3a3a3a" text-anchor="middle" textLength="3.99" lengthAdjust="spacingAndGlyphs" stroke="#3a3a3a" stroke-width="0.1" >5</text>
<line x1="665" y1="416.8" x2="669.1" y2="420.9" stroke="#404040" stroke-width="0.9" />
<text x="673.09" y="426.74" font-size="6.9" fill="#3a3a3a" text-anchor="middle" textLength="3.99" lengthAdjust="spacingAndGlyphs" stroke="#3a3a3a" stroke-width="0.1" >2</text>
<circle cx="645.2" cy="397" r="28.7" fill="url(#gKnobO)" stroke="url(#gRim)" stroke-width="1.3"/>
<circle cx="645.7" cy="397" r="15.7" fill="url(#gKnobRing)"/>
<circle cx="645.7" cy="397" r="13.9" fill="url(#gKnobI)"/>
<polygon points="618.3,397.4 627.1,392.1 627.1,402.9" fill="#00a040" />
<polygon points="649.4,405 653.5,401.4 654.6,407" fill="#00a040" />
<rect x="627.6" y="427.8" width="36" height="13.4" fill="#000" />
<rect x="628.6" y="428.8" width="35" height="12.4" fill="#ffffff" />
<text x="629.6" y="436.8" font-size="9.3" fill="#000080" stroke="#000080" stroke-width="0.15" >5</text>
<text x="613.1" y="436.6" font-size="9.5" fill="#303030" text-anchor="middle" stroke="#303030" stroke-width="0.15" >V</text>
<text x="677.8" y="436.6" font-size="9.5" fill="#303030" text-anchor="middle" stroke="#303030" stroke-width="0.15" >mV</text>
<text x="453.9" y="38.1" font-size="12" fill="#f098a8" text-anchor="middle" font-weight="bold" textLength="41.9" lengthAdjust="spacingAndGlyphs" >Trigger</text>
<text x="430.8" y="56.9" font-size="9" fill="#333333" textLength="21.2" lengthAdjust="spacingAndGlyphs" stroke="#333333" stroke-width="0.3" >Level</text>
<rect x="421.1" y="59.4" width="40.7" height="81.2" fill="#f4f4f4" />
<rect x="422.2" y="60.5" width="38.5" height="79" fill="#000" />
<rect x="423.3" y="61.6" width="36.3" height="76.8" fill="#b9b9b9" />
<rect x="429" y="62.3" width="24.7" height="74.5" fill="url(#gDrumV)" />
<rect x="452.8" y="62.3" width="1.1" height="74.5" fill="#101010" />
<rect x="428.8" y="62.3" width="0.8" height="74.5" fill="#484848" />
<rect x="429" y="136.8" width="24.9" height="0.8" fill="#303030" />
<clipPath id="cp421_59"><rect x="429" y="62.3" width="24.7" height="74.5"/></clipPath>
<g clip-path="url(#cp421_59)">
<rect x="429" y="66.26" width="2.4" height="0.8" fill="#484848" />
<rect x="450.4" y="66.26" width="2.4" height="0.8" fill="#484848" />
<rect x="429" y="70.19" width="2.4" height="0.8" fill="#484848" />
<rect x="450.4" y="70.19" width="2.4" height="0.8" fill="#484848" />
<rect x="429" y="74.12" width="2.4" height="0.8" fill="#484848" />
<rect x="450.4" y="74.12" width="2.4" height="0.8" fill="#484848" />
<rect x="429" y="78.05" width="4.8" height="0.8" fill="#484848" />
<rect x="448" y="78.05" width="4.8" height="0.8" fill="#484848" />
<rect x="429" y="81.98" width="2.4" height="0.8" fill="#484848" />
<rect x="450.4" y="81.98" width="2.4" height="0.8" fill="#484848" />
<rect x="429" y="85.91" width="2.4" height="0.8" fill="#484848" />
<rect x="450.4" y="85.91" width="2.4" height="0.8" fill="#484848" />
<rect x="429" y="89.84" width="2.4" height="0.8" fill="#484848" />
<rect x="450.4" y="89.84" width="2.4" height="0.8" fill="#484848" />
<rect x="429" y="93.77" width="2.4" height="0.8" fill="#484848" />
<rect x="450.4" y="93.77" width="2.4" height="0.8" fill="#484848" />
<rect x="429" y="97.7" width="4.8" height="0.8" fill="#484848" />
<rect x="448" y="97.7" width="4.8" height="0.8" fill="#484848" />
<rect x="429" y="101.63" width="2.4" height="0.8" fill="#484848" />
<rect x="450.4" y="101.63" width="2.4" height="0.8" fill="#484848" />
<rect x="429" y="105.56" width="2.4" height="0.8" fill="#484848" />
<rect x="450.4" y="105.56" width="2.4" height="0.8" fill="#484848" />
<rect x="429" y="109.49" width="2.4" height="0.8" fill="#484848" />
<rect x="450.4" y="109.49" width="2.4" height="0.8" fill="#484848" />
<rect x="429" y="113.42" width="2.4" height="0.8" fill="#484848" />
<rect x="450.4" y="113.42" width="2.4" height="0.8" fill="#484848" />
<rect x="429" y="117.35" width="4.8" height="0.8" fill="#484848" />
<rect x="448" y="117.35" width="4.8" height="0.8" fill="#484848" />
<rect x="429" y="121.28" width="2.4" height="0.8" fill="#484848" />
<rect x="450.4" y="121.28" width="2.4" height="0.8" fill="#484848" />
<rect x="429" y="125.21" width="2.4" height="0.8" fill="#484848" />
<rect x="450.4" y="125.21" width="2.4" height="0.8" fill="#484848" />
<rect x="429" y="129.14" width="2.4" height="0.8" fill="#484848" />
<rect x="450.4" y="129.14" width="2.4" height="0.8" fill="#484848" />
<rect x="429" y="133.07" width="2.4" height="0.8" fill="#484848" />
<rect x="450.4" y="133.07" width="2.4" height="0.8" fill="#484848" />
<text x="441.05" y="81.1" font-size="9.8" fill="#000" text-anchor="middle" textLength="11.96" lengthAdjust="spacingAndGlyphs" stroke="#000" stroke-width="0.2" >-10</text>
<text x="441.05" y="101.2" font-size="9.8" fill="#000" text-anchor="middle" textLength="4.6" lengthAdjust="spacingAndGlyphs" stroke="#000" stroke-width="0.2" >0</text>
<text x="441.05" y="120.7" font-size="9.8" fill="#000" text-anchor="middle" textLength="9.21" lengthAdjust="spacingAndGlyphs" stroke="#000" stroke-width="0.2" >10</text>
</g>
<polygon points="423,93.5 428.2,98.1 423,102.7" fill="#ff0000" />
<polygon points="459.2,93.5 453.9,98.1 459.2,102.7" fill="#ff0000" />
<polygon points="416.8,86.4 420.1,93.9 413.5,93.9" fill="#ec929e" />
<polygon points="416.8,109 420.1,102 413.5,102" fill="#ec929e" />
<rect x="416.2" y="93.6" width="1.2" height="9" fill="#ec929e" />
<text x="485.2" y="62.6" font-size="9" fill="#333333" text-anchor="end" stroke="#333333" stroke-width="0.3" >AC</text>
<text x="485.2" y="77" font-size="9" fill="#333333" text-anchor="end" stroke="#333333" stroke-width="0.3" >DC</text>
<rect x="487.2" y="49.4" width="14.2" height="33.6" fill="#f4f4f4" />
<rect x="488.3" y="50.5" width="12" height="31.4" fill="#000" />
<rect x="489.4" y="51.6" width="9.8" height="29.2" fill="#b9b9b9" />
<rect x="492.7" y="65" width="2.2" height="11.5" fill="#000" />
<rect x="494.9" y="65" width="0.8" height="11.5" fill="#dcdcdc" />
<rect x="489.3" y="51.4" width="10.5" height="14.5" fill="#404040" />
<rect x="489.3" y="51.4" width="9.9" height="13.9" fill="#e4e4e4" />
<rect x="490.6" y="53.6" width="7.3" height="1.1" fill="#3a3a3a" />
<rect x="490.6" y="56.6" width="7.3" height="1.1" fill="#3a3a3a" />
<rect x="490.6" y="59.6" width="7.3" height="1.1" fill="#3a3a3a" />
<rect x="490.6" y="62.6" width="7.3" height="1.1" fill="#3a3a3a" />
<rect x="487.2" y="94.4" width="14.2" height="32.9" fill="#f4f4f4" />
<rect x="488.3" y="95.5" width="12" height="30.7" fill="#000" />
<rect x="489.4" y="96.6" width="9.8" height="28.5" fill="#b9b9b9" />
<rect x="492.7" y="99.7" width="2.2" height="11.6" fill="#000" />
<rect x="494.9" y="99.7" width="0.8" height="11.6" fill="#dcdcdc" />
<rect x="489.3" y="111.3" width="10.5" height="14.6" fill="#404040" />
<rect x="489.3" y="111.3" width="9.9" height="14" fill="#e4e4e4" />
<rect x="490.6" y="113.5" width="7.3" height="1.1" fill="#3a3a3a" />
<rect x="490.6" y="116.5" width="7.3" height="1.1" fill="#3a3a3a" />
<rect x="490.6" y="119.5" width="7.3" height="1.1" fill="#3a3a3a" />
<rect x="490.6" y="122.5" width="7.3" height="1.1" fill="#3a3a3a" />
<path d="M483.6,98.7 H480.6 V108.5 H476.3" fill="none" stroke="#404040" stroke-width="1"/>
<path d="M476.3,113.3 H480.6 V123 H483.6" fill="none" stroke="#404040" stroke-width="1"/>
<text x="484.6" y="150.7" font-size="9" fill="#333333" text-anchor="end" stroke="#333333" stroke-width="0.3" >Auto</text>
<rect x="487.2" y="139.7" width="14.7" height="14.6" fill="#000" />
<rect x="487.2" y="139.7" width="13.6" height="13.5" fill="#ffffff" />
<rect x="488.2" y="140.7" width="12.6" height="12.5" fill="url(#gBtn)" />
<text x="484.8" y="165.7" font-size="9" fill="#333333" text-anchor="end" textLength="38.4" lengthAdjust="spacingAndGlyphs" stroke="#333333" stroke-width="0.3" >One-Shot</text>
<rect x="487.2" y="156" width="14.7" height="14.6" fill="#000" />
<rect x="487.2" y="156" width="13.6" height="13.5" fill="#ffffff" />
<rect x="488.2" y="157" width="12.6" height="12.5" fill="url(#gBtn)" />
<text x="484.8" y="181.8" font-size="10" fill="#333333" text-anchor="end" textLength="35.4" lengthAdjust="spacingAndGlyphs" stroke="#333333" stroke-width="0.3" >Cursors</text>
<rect x="487.2" y="171.8" width="14.7" height="14.6" fill="#000" />
<rect x="487.2" y="171.8" width="13.6" height="13.5" fill="#ffffff" />
<rect x="488.2" y="172.8" width="12.6" height="12.5" fill="url(#gBtnP)" />
<text x="442.5" y="201.6" font-size="9" fill="#333333" textLength="28.4" lengthAdjust="spacingAndGlyphs" stroke="#333333" stroke-width="0.3" >Source</text>
<text x="436.8" y="212.6" font-size="8.6" fill="#ffff00" text-anchor="middle" font-weight="bold" >A</text>
<text x="451.2" y="212.6" font-size="8.6" fill="#1e9ee8" text-anchor="middle" font-weight="bold" >B</text>
<text x="465.7" y="212.6" font-size="8.6" fill="#e6007e" text-anchor="middle" font-weight="bold" >C</text>
<text x="480" y="212.6" font-size="8.6" fill="#00a040" text-anchor="middle" font-weight="bold" >D</text>
<rect x="424.9" y="214.8" width="63.8" height="15" fill="#f4f4f4" />
<rect x="426" y="215.9" width="61.6" height="12.8" fill="#000" />
<rect x="427.1" y="217" width="59.4" height="10.6" fill="#b9b9b9" />
<rect x="441.7" y="220.6" width="40.4" height="2.3" fill="#000" />
<rect x="441.7" y="222.9" width="40.4" height="0.8" fill="#dcdcdc" />
<rect x="427.2" y="217.1" width="15.1" height="11" fill="#404040" />
<rect x="427.2" y="217.1" width="14.5" height="10.4" fill="#e4e4e4" />
<rect x="430.1" y="218.7" width="1.1" height="7.3" fill="#3a3a3a" />
<rect x="433" y="218.7" width="1.1" height="7.3" fill="#3a3a3a" />
<rect x="435.9" y="218.7" width="1.1" height="7.3" fill="#3a3a3a" />
<rect x="438.8" y="218.7" width="1.1" height="7.3" fill="#3a3a3a" />
<text x="454.3" y="249.9" font-size="12" fill="#f08020" text-anchor="middle" font-weight="bold" textLength="60.1" lengthAdjust="spacingAndGlyphs" >Horizontal</text>
<text x="441.8" y="272" font-size="9" fill="#333333" textLength="28.2" lengthAdjust="spacingAndGlyphs" stroke="#333333" stroke-width="0.3" >Source</text>
<path d="M423,281.4 L433.1,274.6 V281.4" fill="none" stroke="#f08020" stroke-width="1.1"/>
<text x="442.3" y="280.8" font-size="8.6" fill="#ffff00" text-anchor="middle" font-weight="bold" >A</text>
<text x="457.2" y="280.8" font-size="8.6" fill="#1e9ee8" text-anchor="middle" font-weight="bold" >B</text>
<text x="471.6" y="280.8" font-size="8.6" fill="#e6007e" text-anchor="middle" font-weight="bold" >C</text>
<text x="486.3" y="280.8" font-size="8.6" fill="#00a040" text-anchor="middle" font-weight="bold" >D</text>
<rect x="418" y="284" width="78.4" height="15.1" fill="#f4f4f4" />
<rect x="419.1" y="285.1" width="76.2" height="12.9" fill="#000" />
<rect x="420.2" y="286.2" width="74" height="10.7" fill="#b9b9b9" />
<rect x="434.7" y="289.8" width="55.8" height="2.2" fill="#000" />
<rect x="434.7" y="292" width="55.8" height="0.8" fill="#dcdcdc" />
<rect x="420.1" y="285.9" width="15.2" height="11.5" fill="#404040" />
<rect x="420.1" y="285.9" width="14.6" height="10.9" fill="#e4e4e4" />
<rect x="423" y="287.5" width="1.1" height="7.8" fill="#3a3a3a" />
<rect x="425.9" y="287.5" width="1.1" height="7.8" fill="#3a3a3a" />
<rect x="428.8" y="287.5" width="1.1" height="7.8" fill="#3a3a3a" />
<rect x="431.7" y="287.5" width="1.1" height="7.8" fill="#3a3a3a" />
<text x="440.4" y="309.7" font-size="9" fill="#333333" textLength="31.8" lengthAdjust="spacingAndGlyphs" stroke="#333333" stroke-width="0.3" >Position</text>
<rect x="417" y="312.4" width="81.2" height="39.4" fill="#f4f4f4" />
<rect x="418.1" y="313.5" width="79" height="37.2" fill="#000" />
<rect x="419.2" y="314.6" width="76.8" height="35" fill="#b9b9b9" />
<rect x="420" y="319.8" width="74.7" height="24.6" fill="url(#gDrumH)" />
<rect x="420" y="343.6" width="74.7" height="1.5" fill="#101010" />
<rect x="420" y="318.9" width="74.7" height="0.9" fill="#e4e4e4" />
<rect x="420" y="319.8" width="74.7" height="1" fill="#484848" />
<clipPath id="cph"><rect x="420" y="319.8" width="74.7" height="24.6"/></clipPath>
<g clip-path="url(#cph)">
<rect x="412.1" y="320" width="0.8" height="4.6" fill="#484848" />
<rect x="412.1" y="339.2" width="0.8" height="4.6" fill="#484848" />
<rect x="416.1" y="320" width="0.8" height="2.4" fill="#484848" />
<rect x="416.1" y="341.4" width="0.8" height="2.4" fill="#484848" />
<rect x="420.1" y="320" width="0.8" height="2.4" fill="#484848" />
<rect x="420.1" y="341.4" width="0.8" height="2.4" fill="#484848" />
<rect x="424.1" y="320" width="0.8" height="2.4" fill="#484848" />
<rect x="424.1" y="341.4" width="0.8" height="2.4" fill="#484848" />
<rect x="428.1" y="320" width="0.8" height="2.4" fill="#484848" />
<rect x="428.1" y="341.4" width="0.8" height="2.4" fill="#484848" />
<rect x="432.1" y="320" width="0.8" height="4.6" fill="#484848" />
<rect x="432.1" y="339.2" width="0.8" height="4.6" fill="#484848" />
<rect x="436.1" y="320" width="0.8" height="2.4" fill="#484848" />
<rect x="436.1" y="341.4" width="0.8" height="2.4" fill="#484848" />
<rect x="440.1" y="320" width="0.8" height="2.4" fill="#484848" />
<rect x="440.1" y="341.4" width="0.8" height="2.4" fill="#484848" />
<rect x="444.1" y="320" width="0.8" height="2.4" fill="#484848" />
<rect x="444.1" y="341.4" width="0.8" height="2.4" fill="#484848" />
<rect x="448.1" y="320" width="0.8" height="2.4" fill="#484848" />
<rect x="448.1" y="341.4" width="0.8" height="2.4" fill="#484848" />
<rect x="452.1" y="320" width="0.8" height="4.6" fill="#484848" />
<rect x="452.1" y="339.2" width="0.8" height="4.6" fill="#484848" />
<rect x="456.1" y="320" width="0.8" height="2.4" fill="#484848" />
<rect x="456.1" y="341.4" width="0.8" height="2.4" fill="#484848" />
<rect x="460.1" y="320" width="0.8" height="2.4" fill="#484848" />
<rect x="460.1" y="341.4" width="0.8" height="2.4" fill="#484848" />
<rect x="464.1" y="320" width="0.8" height="2.4" fill="#484848" />
<rect x="464.1" y="341.4" width="0.8" height="2.4" fill="#484848" />
<rect x="468.1" y="320" width="0.8" height="2.4" fill="#484848" />
<rect x="468.1" y="341.4" width="0.8" height="2.4" fill="#484848" />
<rect x="472.1" y="320" width="0.8" height="4.6" fill="#484848" />
<rect x="472.1" y="339.2" width="0.8" height="4.6" fill="#484848" />
<rect x="476.1" y="320" width="0.8" height="2.4" fill="#484848" />
<rect x="476.1" y="341.4" width="0.8" height="2.4" fill="#484848" />
<rect x="480.1" y="320" width="0.8" height="2.4" fill="#484848" />
<rect x="480.1" y="341.4" width="0.8" height="2.4" fill="#484848" />
<rect x="484.1" y="320" width="0.8" height="2.4" fill="#484848" />
<rect x="484.1" y="341.4" width="0.8" height="2.4" fill="#484848" />
<rect x="488.1" y="320" width="0.8" height="2.4" fill="#484848" />
<rect x="488.1" y="341.4" width="0.8" height="2.4" fill="#484848" />
<rect x="492.1" y="320" width="0.8" height="4.6" fill="#484848" />
<rect x="492.1" y="339.2" width="0.8" height="4.6" fill="#484848" />
<rect x="496.1" y="320" width="0.8" height="2.4" fill="#484848" />
<rect x="496.1" y="341.4" width="0.8" height="2.4" fill="#484848" />
<text x="432.4" y="334.6" font-size="10.2" fill="#000" text-anchor="middle" textLength="13.9" lengthAdjust="spacingAndGlyphs" stroke="#000" stroke-width="0.2" >160</text>
<text x="452.45" y="334.6" font-size="10.2" fill="#000" text-anchor="middle" textLength="13.9" lengthAdjust="spacingAndGlyphs" stroke="#000" stroke-width="0.2" >150</text>
<text x="472.5" y="334.6" font-size="10.2" fill="#000" text-anchor="middle" textLength="13.9" lengthAdjust="spacingAndGlyphs" stroke="#000" stroke-width="0.2" >140</text>
<text x="492.55" y="334.6" font-size="10.2" fill="#000" text-anchor="middle" textLength="13.9" lengthAdjust="spacingAndGlyphs" stroke="#000" stroke-width="0.2" >130</text>
</g>
<polygon points="451.7,314 461.2,314 456.45,318.9" fill="#ff0000" />
<polygon points="451.7,349.8 461.2,349.8 456.45,344.9" fill="#ff0000" />
<path d="M413.5,441.2 L413.5,397.75 A44.05,44.05 0 0 1 501.6,397.75 L501.6,441.2 L476.4,441.2 L476.4,418 L438.5,418 L438.5,441.2 Z" fill="#ffffff" stroke="#383838" stroke-width="1"/>
<rect x="414.5" y="441.8" width="86.1" height="0.9" fill="#c4c4c4" />
<polygon points="473.3,375.75 482.65,360.79 479.77,358.98 470.42,373.95" fill="#adadad" />
<line x1="473.3" y1="375.75" x2="482.65" y2="360.79" stroke="#505050" stroke-width="0.9" />
<line x1="470.42" y1="373.95" x2="479.77" y2="358.98" stroke="#505050" stroke-width="0.9" />
<line x1="437.4" y1="416.8" x2="434.15" y2="420.05" stroke="#404040" stroke-width="0.9" />
<text x="429.51" y="428.54" font-size="6.9" fill="#3a3a3a" text-anchor="middle" textLength="11.97" lengthAdjust="spacingAndGlyphs" stroke="#3a3a3a" stroke-width="0.1" >200</text>
<line x1="432.74" y1="410.62" x2="428.72" y2="412.86" stroke="#404040" stroke-width="0.9" />
<text x="420.98" y="420.13" font-size="6.9" fill="#3a3a3a" text-anchor="middle" textLength="11.97" lengthAdjust="spacingAndGlyphs" stroke="#3a3a3a" stroke-width="0.1" >100</text>
<line x1="429.94" y1="403.41" x2="425.47" y2="404.46" stroke="#404040" stroke-width="0.9" />
<text x="418.83" y="409.59" font-size="6.9" fill="#3a3a3a" text-anchor="middle" textLength="7.98" lengthAdjust="spacingAndGlyphs" stroke="#3a3a3a" stroke-width="0.1" >50</text>
<line x1="429.23" y1="395.71" x2="424.63" y2="395.49" stroke="#404040" stroke-width="0.9" />
<text x="418.64" y="397.67" font-size="6.9" fill="#3a3a3a" text-anchor="middle" textLength="7.98" lengthAdjust="spacingAndGlyphs" stroke="#3a3a3a" stroke-width="0.1" >20</text>
<line x1="430.65" y1="388.1" x2="426.29" y2="386.64" stroke="#404040" stroke-width="0.9" />
<text x="420.6" y="387.18" font-size="6.9" fill="#3a3a3a" text-anchor="middle" textLength="7.98" lengthAdjust="spacingAndGlyphs" stroke="#3a3a3a" stroke-width="0.1" >10</text>
<line x1="434.1" y1="381.18" x2="430.31" y2="378.58" stroke="#404040" stroke-width="0.9" />
<text x="425.36" y="377.64" font-size="6.9" fill="#3a3a3a" text-anchor="middle" textLength="3.99" lengthAdjust="spacingAndGlyphs" stroke="#3a3a3a" stroke-width="0.1" >5</text>
<line x1="439.31" y1="375.46" x2="436.37" y2="371.92" stroke="#404040" stroke-width="0.9" />
<text x="432.54" y="369.75" font-size="6.9" fill="#3a3a3a" text-anchor="middle" textLength="3.99" lengthAdjust="spacingAndGlyphs" stroke="#3a3a3a" stroke-width="0.1" >2</text>
<line x1="445.89" y1="371.39" x2="444.03" y2="367.18" stroke="#404040" stroke-width="0.9" />
<text x="442.61" y="363.64" font-size="6.9" fill="#3a3a3a" text-anchor="middle" textLength="3.99" lengthAdjust="spacingAndGlyphs" stroke="#3a3a3a" stroke-width="0.1" >1</text>
<line x1="453.33" y1="369.27" x2="452.7" y2="364.71" stroke="#404040" stroke-width="0.9" />
<text x="452.57" y="360.02" font-size="6.9" fill="#3a3a3a" text-anchor="middle" textLength="9.97" lengthAdjust="spacingAndGlyphs" stroke="#3a3a3a" stroke-width="0.1" >0.5</text>
<line x1="461.07" y1="369.27" x2="461.7" y2="364.71" stroke="#404040" stroke-width="0.9" />
<text x="462.33" y="360.02" font-size="6.9" fill="#3a3a3a" text-anchor="middle" textLength="9.97" lengthAdjust="spacingAndGlyphs" stroke="#3a3a3a" stroke-width="0.1" >0.2</text>
<line x1="468.51" y1="371.39" x2="470.37" y2="367.18" stroke="#404040" stroke-width="0.9" />
<text x="472.59" y="365.14" font-size="6.9" fill="#3a3a3a" text-anchor="middle" textLength="9.97" lengthAdjust="spacingAndGlyphs" stroke="#3a3a3a" stroke-width="0.1" >0.1</text>
<line x1="475.09" y1="375.46" x2="478.03" y2="371.92" stroke="#404040" stroke-width="0.9" />
<text x="483.36" y="371.95" font-size="6.9" fill="#3a3a3a" text-anchor="middle" textLength="7.98" lengthAdjust="spacingAndGlyphs" stroke="#3a3a3a" stroke-width="0.1" >50</text>
<line x1="480.3" y1="381.18" x2="484.09" y2="378.58" stroke="#404040" stroke-width="0.9" />
<text x="490.54" y="378.34" font-size="6.9" fill="#3a3a3a" text-anchor="middle" textLength="7.98" lengthAdjust="spacingAndGlyphs" stroke="#3a3a3a" stroke-width="0.1" >20</text>
<line x1="483.75" y1="388.1" x2="488.11" y2="386.64" stroke="#404040" stroke-width="0.9" />
<text x="494.1" y="388.08" font-size="6.9" fill="#3a3a3a" text-anchor="middle" textLength="7.98" lengthAdjust="spacingAndGlyphs" stroke="#3a3a3a" stroke-width="0.1" >10</text>
<line x1="485.17" y1="395.71" x2="489.77" y2="395.49" stroke="#404040" stroke-width="0.9" />
<text x="496.36" y="398.17" font-size="6.9" fill="#3a3a3a" text-anchor="middle" textLength="3.99" lengthAdjust="spacingAndGlyphs" stroke="#3a3a3a" stroke-width="0.1" >5</text>
<line x1="484.46" y1="403.41" x2="488.93" y2="404.46" stroke="#404040" stroke-width="0.9" />
<text x="495.77" y="408.89" font-size="6.9" fill="#3a3a3a" text-anchor="middle" textLength="3.99" lengthAdjust="spacingAndGlyphs" stroke="#3a3a3a" stroke-width="0.1" >2</text>
<line x1="481.66" y1="410.62" x2="485.68" y2="412.86" stroke="#404040" stroke-width="0.9" />
<text x="493.22" y="420.63" font-size="6.9" fill="#3a3a3a" text-anchor="middle" textLength="3.99" lengthAdjust="spacingAndGlyphs" stroke="#3a3a3a" stroke-width="0.1" >1</text>
<line x1="477" y1="416.8" x2="480.25" y2="420.05" stroke="#404040" stroke-width="0.9" />
<text x="485.49" y="428.54" font-size="6.9" fill="#3a3a3a" text-anchor="middle" textLength="9.97" lengthAdjust="spacingAndGlyphs" stroke="#3a3a3a" stroke-width="0.1" >0.5</text>
<circle cx="457.2" cy="397" r="28.7" fill="url(#gKnobO)" stroke="url(#gRim)" stroke-width="1.3"/>
<circle cx="457.7" cy="397" r="15.7" fill="url(#gKnobRing)"/>
<circle cx="457.7" cy="397" r="13.9" fill="url(#gKnobI)"/>
<polygon points="453.6,370.2 449.2,379.8 459.9,377.3" fill="#f08020" />
<polygon points="448.7,398.7 446.1,405.5 452.8,403.3" fill="#f08020" />
<rect x="439.6" y="427.8" width="36" height="13.4" fill="#000" />
<rect x="440.6" y="428.8" width="35" height="12.4" fill="#ffffff" />
<text x="441.6" y="436.8" font-size="9.3" fill="#000080" stroke="#000080" stroke-width="0.15" >1.23m</text>
<text x="425.4" y="436.8" font-size="9.5" fill="#303030" text-anchor="middle" stroke="#303030" stroke-width="0.15" >mS</text>
<text x="490.2" y="436.8" font-size="9.5" fill="#303030" text-anchor="middle" stroke="#303030" stroke-width="0.15" >µS</text>
</svg>
</body></html>
